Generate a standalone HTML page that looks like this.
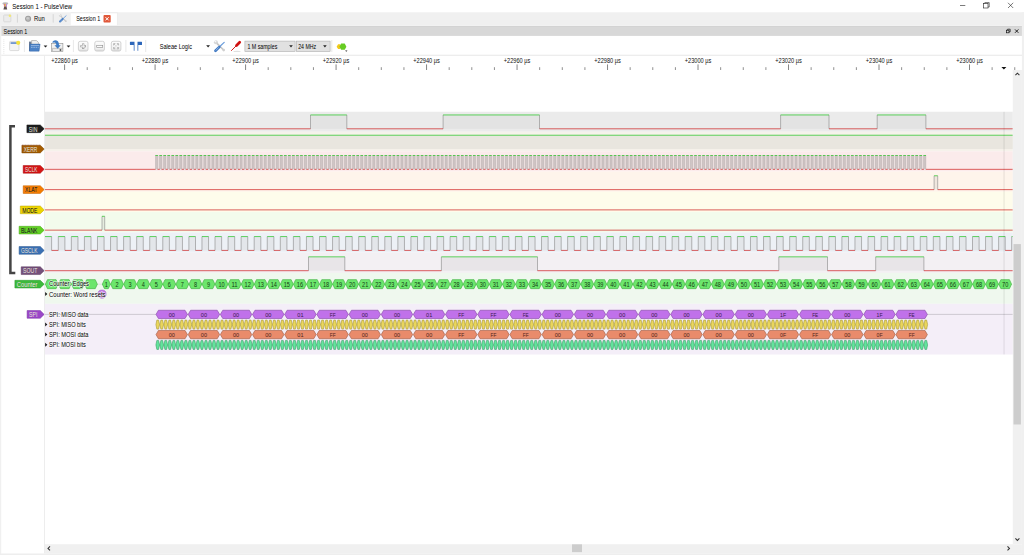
<!DOCTYPE html>
<html lang="en"><head><meta charset="utf-8"><title>Session 1 - PulseView</title>
<style>html,body{margin:0;padding:0;background:#fff;overflow:hidden}svg{display:block;position:absolute;left:0;top:0}text{white-space:pre}</style></head>
<body>
<svg width="1024" height="555" viewBox="0 0 1024 555" font-family="'Liberation Sans', sans-serif" shape-rendering="auto">
<rect x="0.00" y="0.00" width="1024.00" height="555.00" fill="#ffffff" />
<text x="12.30" y="8.75" font-size="7.2" fill="#000" text-anchor="start" textLength="59.80" lengthAdjust="spacingAndGlyphs" >Session 1 - PulseView</text>
<g id="appicon"><ellipse cx="5.3" cy="3.5" rx="3.0" ry="1.2" fill="#bcbcbc"/><rect x="3.9" y="3.8" width="1.05" height="2.9" fill="#e87474"/><rect x="4.95" y="3.8" width="1.0" height="2.9" fill="#d6c654"/><rect x="5.95" y="3.8" width="1.05" height="2.9" fill="#c486e2"/><path d="M4.3 6.5 H6.5 L7.2 9.6 H3.4Z" fill="#5e5050"/></g>
<line x1="960.00" y1="5.50" x2="965.30" y2="5.50" stroke="#222" stroke-width="0.6" />
<rect x="983.6" y="3.6" width="4.4" height="4.4" fill="none" stroke="#222" stroke-width="0.6"/>
<path d="M984.8 3.6 V2.6 H989.2 V7 H988" fill="none" stroke="#222" stroke-width="0.6"/>
<path d="M1008 2.8 L1013.2 8 M1013.2 2.8 L1008 8" stroke="#222" stroke-width="0.6" fill="none"/>
<rect x="0.00" y="12.30" width="1024.00" height="13.40" fill="#f0f0f0" />
<rect x="3.7" y="15" width="7.2" height="6.8" rx="0.8" fill="#ececec" stroke="#cfcfcf" stroke-width="0.6"/>
<circle cx="9.9" cy="15.8" r="1.25" fill="#f2e878"/>
<line x1="17.40" y1="14.20" x2="17.40" y2="22.60" stroke="#cccccc" stroke-width="0.7" />
<circle cx="28.1" cy="18.7" r="3.0" fill="#999"/><circle cx="28.1" cy="18.7" r="2.2" fill="#b4b4b4"/><circle cx="27.7" cy="18.2" r="1.3" fill="#cacaca"/>
<text x="34.10" y="20.60" font-size="6.6" fill="#000" text-anchor="start" textLength="10.80" lengthAdjust="spacingAndGlyphs" >Run</text>
<line x1="53.20" y1="14.20" x2="53.20" y2="22.60" stroke="#cccccc" stroke-width="0.7" />
<path d="M60.54 15.88L65.72 21.06" stroke="#c6c6c6" stroke-width="1.19" stroke-linecap="round" fill="none"/>
<circle cx="60.33" cy="15.60" r="1.40" fill="#d6d6d6"/>
<path d="M59.14 14.34L60.54 15.60" stroke="#fdfdfd" stroke-width="0.77" fill="none"/>
<circle cx="65.79" cy="21.13" r="0.91" fill="#cfcfcf"/>
<path d="M62.64 18.96L66.14 15.74" stroke="#6c9edc" stroke-width="0.88" stroke-linecap="round" fill="none"/>
<path d="M60.05 21.55L62.64 19.03" stroke="#3f78c2" stroke-width="1.89" stroke-linecap="round" fill="none"/>
<path d="M60.33 21.20L62.08 19.52" stroke="#a4c6ee" stroke-width="0.56" stroke-linecap="round" fill="none"/>
<rect x="70.80" y="12.80" width="46.60" height="13.00" fill="#ffffff" />
<line x1="70.80" y1="12.80" x2="117.40" y2="12.80" stroke="#e0e0e0" stroke-width="0.5" />
<line x1="117.40" y1="12.80" x2="117.40" y2="25.60" stroke="#e0e0e0" stroke-width="0.5" />
<text x="76.20" y="21.30" font-size="6.4" fill="#000" text-anchor="start" textLength="24.10" lengthAdjust="spacingAndGlyphs" >Session 1</text>
<rect x="103.50" y="15.10" width="7.20" height="7.40" fill="#e0583a" rx="0.8"/>
<path d="M105.5 17.2 L108.7 20.4 M108.7 17.2 L105.5 20.4" stroke="#fff" stroke-width="1" fill="none"/>
<rect x="1.30" y="25.30" width="1021.00" height="0.70" fill="#f8f8f8" />
<rect x="1.30" y="26.00" width="1021.00" height="9.70" fill="#d8d8d8" />
<line x1="1.30" y1="26.25" x2="1022.00" y2="26.25" stroke="#cccccc" stroke-width="0.5" />
<line x1="1.30" y1="35.45" x2="1022.00" y2="35.45" stroke="#c8c8c8" stroke-width="0.5" />
<text x="3.60" y="34.00" font-size="6.4" fill="#000" text-anchor="start" textLength="23.60" lengthAdjust="spacingAndGlyphs" >Session 1</text>
<rect x="1006.4" y="30.2" width="2.6" height="2.6" fill="none" stroke="#111" stroke-width="0.7"/><path d="M1007.6 30.2 V29.2 H1010.2 V31.8 H1009" fill="none" stroke="#111" stroke-width="0.7"/>
<path d="M1015 29.4 L1018.4 32.8 M1018.4 29.4 L1015 32.8" stroke="#111" stroke-width="0.9" fill="none"/>
<rect x="1.30" y="35.90" width="1021.00" height="19.10" fill="#ffffff" />
<line x1="1.30" y1="55.25" x2="1022.00" y2="55.25" stroke="#dddddd" stroke-width="0.7" />
<rect x="3.60" y="39.50" width="0.60" height="0.70" fill="#c0c0c0" />
<rect x="3.60" y="41.40" width="0.60" height="0.70" fill="#c0c0c0" />
<rect x="3.60" y="43.30" width="0.60" height="0.70" fill="#c0c0c0" />
<rect x="3.60" y="45.20" width="0.60" height="0.70" fill="#c0c0c0" />
<rect x="3.60" y="47.10" width="0.60" height="0.70" fill="#c0c0c0" />
<rect x="3.60" y="49.00" width="0.60" height="0.70" fill="#c0c0c0" />
<rect x="3.60" y="50.90" width="0.60" height="0.70" fill="#c0c0c0" />
<rect x="3.60" y="52.80" width="0.60" height="0.70" fill="#c0c0c0" />
<rect x="9.6" y="41.4" width="9.4" height="9.2" rx="0.8" fill="#f4f4f4" stroke="#c8c8c8" stroke-width="0.6"/>
<rect x="10.60" y="42.40" width="6.40" height="1.30" fill="#3a6fc0" />
<circle cx="18.2" cy="42.8" r="2.1" fill="#f4e23c"/>
<line x1="24.40" y1="40.00" x2="24.40" y2="52.00" stroke="#d8d8d8" stroke-width="0.6" />
<path d="M29.0 41.6 h2.6 v9.4 h-2.6z" fill="#6c7c94"/>
<path d="M31.6 40.5 h4.8 l2.0 1.8 v2.4 h-6.8z" fill="#eeeeee" stroke="#8c8c8c" stroke-width="0.5"/>
<path d="M29.9 44.1 h10.2 l-1.0 7.1 h-9.7z" fill="#4c82c6" stroke="#2e5e9e" stroke-width="0.4"/>
<path d="M31 45.5 h8.2" stroke="#b4cdee" stroke-width="0.6"/>
<path d="M31 47.3 h7.6" stroke="#a9c6ea" stroke-width="0.8" stroke-dasharray="1.6 0.7"/>
<path d="M43.6 45.4 h3.8 l-1.9 2.2z" fill="#222"/>
<rect x="51.5" y="43.3" width="11.4" height="8.3" fill="#f1f1f1" stroke="#8e8e8e" stroke-width="0.6"/>
<path d="M51.5 48.4 h11.4" stroke="#9a9a9a" stroke-width="0.5"/>
<rect x="51.80" y="48.70" width="10.80" height="2.60" fill="#c4c4c4" />
<rect x="53.00" y="49.30" width="6.20" height="1.40" fill="#fbfbfb" />
<rect x="59.90" y="49.00" width="1.00" height="2.00" fill="#555" />
<path d="M52.4 42.8 C52.2 40.4 55.8 39.6 57.6 41.0 C58.7 42.0 59.0 43.6 59.0 45.3 L60.7 45.3 L57.7 48.7 L54.5 45.3 L56.3 45.3 C56.3 43.6 55.7 42.5 54.4 42.5 Z" fill="#3f7cc4"/>
<path d="M66.6 45.4 h3.8 l-1.9 2.2z" fill="#222"/>
<line x1="73.40" y1="40.00" x2="73.40" y2="52.00" stroke="#d8d8d8" stroke-width="0.6" />
<defs><linearGradient id="bg" x1="0" y1="0" x2="0" y2="1"><stop offset="0" stop-color="#fdfdfd"/><stop offset="0.75" stop-color="#f1f1f1"/><stop offset="1" stop-color="#d8d8d8"/></linearGradient></defs>
<rect x="78.4" y="41.3" width="9.6" height="9.8" rx="1.8" fill="url(#bg)" stroke="#c2c2c2" stroke-width="0.7"/>
<rect x="94.8" y="41.3" width="9.6" height="9.8" rx="1.8" fill="url(#bg)" stroke="#c2c2c2" stroke-width="0.7"/>
<rect x="111.3" y="41.3" width="9.6" height="9.8" rx="1.8" fill="url(#bg)" stroke="#c2c2c2" stroke-width="0.7"/>
<path d="M83.2 43.4 v5.6 M80.4 46.2 h5.6" stroke="#909090" stroke-width="2.1" fill="none"/><path d="M83.2 44.0 v4.4 M81.0 46.2 h4.4" stroke="#fbfbfb" stroke-width="1.0" fill="none"/>
<rect x="96.7" y="45.3" width="6.0" height="2.0" fill="#fbfbfb" stroke="#909090" stroke-width="0.6"/>
<path d="M113.6 43.6 h1.8 M113.6 43.6 v1.8 M118.6 43.6 h-1.8 M118.6 43.6 v1.8 M113.6 48.8 h1.8 M113.6 48.8 v-1.8 M118.6 48.8 h-1.8 M118.6 48.8 v-1.8 M114.2 44.2 l1.2 1.2 M118 44.2 l-1.2 1.2 M114.2 48.2 l1.2 -1.2 M118 48.2 l-1.2 -1.2" stroke="#a0a0a0" stroke-width="0.7" fill="none"/>
<line x1="125.90" y1="40.00" x2="125.90" y2="52.00" stroke="#d8d8d8" stroke-width="0.6" />
<path d="M130.4 41.8 h4.1 v8.9 h-0.75 v-5.8 h-3.35 a0.5 0.5 0 0 1 -0.5 -0.5 v-2.1 a0.5 0.5 0 0 1 0.5 -0.5z" fill="#2c66ba"/>
<path d="M137.5 41.8 h4.0 a0.5 0.5 0 0 1 0.5 0.5 v2.1 a0.5 0.5 0 0 1 -0.5 0.5 h-3.25 v5.8 h-0.75z" fill="#2c66ba"/>
<line x1="145.70" y1="40.00" x2="145.70" y2="52.00" stroke="#d8d8d8" stroke-width="0.6" />
<text x="159.80" y="48.60" font-size="6.6" fill="#000" text-anchor="start" textLength="32.20" lengthAdjust="spacingAndGlyphs" >Saleae Logic</text>
<path d="M206.2 45.2 h3.8 l-1.9 2.2z" fill="#222"/>
<path d="M216.20 42.60L223.60 50.00" stroke="#c6c6c6" stroke-width="1.70" stroke-linecap="round" fill="none"/>
<circle cx="215.90" cy="42.20" r="2.00" fill="#d6d6d6"/>
<path d="M214.20 40.40L216.20 42.20" stroke="#fdfdfd" stroke-width="1.10" fill="none"/>
<circle cx="223.70" cy="50.10" r="1.30" fill="#cfcfcf"/>
<path d="M219.20 47.00L224.20 42.40" stroke="#6c9edc" stroke-width="1.25" stroke-linecap="round" fill="none"/>
<path d="M215.50 50.70L219.20 47.10" stroke="#3f78c2" stroke-width="2.70" stroke-linecap="round" fill="none"/>
<path d="M215.90 50.20L218.40 47.80" stroke="#a4c6ee" stroke-width="0.80" stroke-linecap="round" fill="none"/>
<ellipse cx="237" cy="51.4" rx="3.8" ry="0.6" fill="#000" fill-opacity="0.12"/>
<path d="M231.5 50.5 L236.4 45.6" stroke="#d41c1c" stroke-width="1.0" stroke-linecap="round"/>
<path d="M236.5 45.5 L239.7 42.3" stroke="#d01010" stroke-width="2.7" stroke-linecap="round"/>
<rect x="244.9" y="41.1" width="50.2" height="10.4" fill="#e1e1e1" stroke="#adadad" stroke-width="0.6"/>
<text x="247.40" y="48.60" font-size="6.5" fill="#000" text-anchor="start" textLength="29.90" lengthAdjust="spacingAndGlyphs" >1 M samples</text>
<path d="M289.2 45.3 h3.6 l-1.8 2.1z" fill="#222"/>
<rect x="296.3" y="41.1" width="33.8" height="10.4" fill="#e1e1e1" stroke="#adadad" stroke-width="0.6"/>
<text x="298.20" y="48.60" font-size="6.5" fill="#000" text-anchor="start" textLength="18.00" lengthAdjust="spacingAndGlyphs" >24 MHz</text>
<path d="M323.1 45.3 h3.6 l-1.8 2.1z" fill="#222"/>
<line x1="331.80" y1="40.00" x2="331.80" y2="52.00" stroke="#d8d8d8" stroke-width="0.6" />
<path d="M336.6 46.7 l1.5 -2.4 h1.8 l1.2 2.4 l-1.2 2.4 h-1.8z" fill="#f2c81a"/>
<path d="M339.4 46.7 l1.7 -3.1 h3.6 l1.7 3.1 l-1.7 3.1 h-3.6z" fill="#66cc22"/>
<path d="M345.1 50.4 h2.4 l-1.2 1.4z" fill="#222"/>
<line x1="44.50" y1="55.60" x2="44.50" y2="553.50" stroke="#e9e9e9" stroke-width="0.8" />
<line x1="64.60" y1="64.40" x2="64.60" y2="70.00" stroke="#333" stroke-width="0.6" />
<text x="64.60" y="62.70" font-size="7.0" fill="#111" text-anchor="middle" textLength="26.60" lengthAdjust="spacingAndGlyphs" >+22860 µs</text>
<line x1="87.22" y1="67.20" x2="87.22" y2="70.00" stroke="#333" stroke-width="0.55" />
<line x1="109.84" y1="67.20" x2="109.84" y2="70.00" stroke="#333" stroke-width="0.55" />
<line x1="132.47" y1="67.20" x2="132.47" y2="70.00" stroke="#333" stroke-width="0.55" />
<line x1="155.09" y1="64.40" x2="155.09" y2="70.00" stroke="#333" stroke-width="0.6" />
<text x="155.09" y="62.70" font-size="7.0" fill="#111" text-anchor="middle" textLength="26.60" lengthAdjust="spacingAndGlyphs" >+22880 µs</text>
<line x1="177.71" y1="67.20" x2="177.71" y2="70.00" stroke="#333" stroke-width="0.55" />
<line x1="200.33" y1="67.20" x2="200.33" y2="70.00" stroke="#333" stroke-width="0.55" />
<line x1="222.96" y1="67.20" x2="222.96" y2="70.00" stroke="#333" stroke-width="0.55" />
<line x1="245.58" y1="64.40" x2="245.58" y2="70.00" stroke="#333" stroke-width="0.6" />
<text x="245.58" y="62.70" font-size="7.0" fill="#111" text-anchor="middle" textLength="26.60" lengthAdjust="spacingAndGlyphs" >+22900 µs</text>
<line x1="268.20" y1="67.20" x2="268.20" y2="70.00" stroke="#333" stroke-width="0.55" />
<line x1="290.82" y1="67.20" x2="290.82" y2="70.00" stroke="#333" stroke-width="0.55" />
<line x1="313.45" y1="67.20" x2="313.45" y2="70.00" stroke="#333" stroke-width="0.55" />
<line x1="336.07" y1="64.40" x2="336.07" y2="70.00" stroke="#333" stroke-width="0.6" />
<text x="336.07" y="62.70" font-size="7.0" fill="#111" text-anchor="middle" textLength="26.60" lengthAdjust="spacingAndGlyphs" >+22920 µs</text>
<line x1="358.69" y1="67.20" x2="358.69" y2="70.00" stroke="#333" stroke-width="0.55" />
<line x1="381.31" y1="67.20" x2="381.31" y2="70.00" stroke="#333" stroke-width="0.55" />
<line x1="403.94" y1="67.20" x2="403.94" y2="70.00" stroke="#333" stroke-width="0.55" />
<line x1="426.56" y1="64.40" x2="426.56" y2="70.00" stroke="#333" stroke-width="0.6" />
<text x="426.56" y="62.70" font-size="7.0" fill="#111" text-anchor="middle" textLength="26.60" lengthAdjust="spacingAndGlyphs" >+22940 µs</text>
<line x1="449.18" y1="67.20" x2="449.18" y2="70.00" stroke="#333" stroke-width="0.55" />
<line x1="471.80" y1="67.20" x2="471.80" y2="70.00" stroke="#333" stroke-width="0.55" />
<line x1="494.43" y1="67.20" x2="494.43" y2="70.00" stroke="#333" stroke-width="0.55" />
<line x1="517.05" y1="64.40" x2="517.05" y2="70.00" stroke="#333" stroke-width="0.6" />
<text x="517.05" y="62.70" font-size="7.0" fill="#111" text-anchor="middle" textLength="26.60" lengthAdjust="spacingAndGlyphs" >+22960 µs</text>
<line x1="539.67" y1="67.20" x2="539.67" y2="70.00" stroke="#333" stroke-width="0.55" />
<line x1="562.29" y1="67.20" x2="562.29" y2="70.00" stroke="#333" stroke-width="0.55" />
<line x1="584.92" y1="67.20" x2="584.92" y2="70.00" stroke="#333" stroke-width="0.55" />
<line x1="607.54" y1="64.40" x2="607.54" y2="70.00" stroke="#333" stroke-width="0.6" />
<text x="607.54" y="62.70" font-size="7.0" fill="#111" text-anchor="middle" textLength="26.60" lengthAdjust="spacingAndGlyphs" >+22980 µs</text>
<line x1="630.16" y1="67.20" x2="630.16" y2="70.00" stroke="#333" stroke-width="0.55" />
<line x1="652.78" y1="67.20" x2="652.78" y2="70.00" stroke="#333" stroke-width="0.55" />
<line x1="675.41" y1="67.20" x2="675.41" y2="70.00" stroke="#333" stroke-width="0.55" />
<line x1="698.03" y1="64.40" x2="698.03" y2="70.00" stroke="#333" stroke-width="0.6" />
<text x="698.03" y="62.70" font-size="7.0" fill="#111" text-anchor="middle" textLength="26.60" lengthAdjust="spacingAndGlyphs" >+23000 µs</text>
<line x1="720.65" y1="67.20" x2="720.65" y2="70.00" stroke="#333" stroke-width="0.55" />
<line x1="743.27" y1="67.20" x2="743.27" y2="70.00" stroke="#333" stroke-width="0.55" />
<line x1="765.90" y1="67.20" x2="765.90" y2="70.00" stroke="#333" stroke-width="0.55" />
<line x1="788.52" y1="64.40" x2="788.52" y2="70.00" stroke="#333" stroke-width="0.6" />
<text x="788.52" y="62.70" font-size="7.0" fill="#111" text-anchor="middle" textLength="26.60" lengthAdjust="spacingAndGlyphs" >+23020 µs</text>
<line x1="811.14" y1="67.20" x2="811.14" y2="70.00" stroke="#333" stroke-width="0.55" />
<line x1="833.76" y1="67.20" x2="833.76" y2="70.00" stroke="#333" stroke-width="0.55" />
<line x1="856.39" y1="67.20" x2="856.39" y2="70.00" stroke="#333" stroke-width="0.55" />
<line x1="879.01" y1="64.40" x2="879.01" y2="70.00" stroke="#333" stroke-width="0.6" />
<text x="879.01" y="62.70" font-size="7.0" fill="#111" text-anchor="middle" textLength="26.60" lengthAdjust="spacingAndGlyphs" >+23040 µs</text>
<line x1="901.63" y1="67.20" x2="901.63" y2="70.00" stroke="#333" stroke-width="0.55" />
<line x1="924.25" y1="67.20" x2="924.25" y2="70.00" stroke="#333" stroke-width="0.55" />
<line x1="946.88" y1="67.20" x2="946.88" y2="70.00" stroke="#333" stroke-width="0.55" />
<line x1="969.50" y1="64.40" x2="969.50" y2="70.00" stroke="#333" stroke-width="0.6" />
<text x="969.50" y="62.70" font-size="7.0" fill="#111" text-anchor="middle" textLength="26.60" lengthAdjust="spacingAndGlyphs" >+23060 µs</text>
<line x1="992.12" y1="67.20" x2="992.12" y2="70.00" stroke="#333" stroke-width="0.55" />
<line x1="1014.75" y1="67.20" x2="1014.75" y2="70.00" stroke="#333" stroke-width="0.55" />
<path d="M1001.4 67 h5 l-2.5 2.6z" fill="#111"/>
<rect x="45.00" y="111.76" width="967.80" height="19.99" fill="#ebebeb" />
<rect x="45.00" y="131.70" width="967.80" height="19.62" fill="#f6f2eb" />
<rect x="45.00" y="151.27" width="967.80" height="20.32" fill="#fbebeb" />
<rect x="45.00" y="171.54" width="967.80" height="20.32" fill="#fef4eb" />
<rect x="45.00" y="191.81" width="967.80" height="20.32" fill="#fefceb" />
<rect x="45.00" y="212.08" width="967.80" height="20.32" fill="#f3fbec" />
<rect x="45.00" y="232.35" width="967.80" height="20.32" fill="#edf1f6" />
<rect x="45.00" y="252.62" width="967.80" height="20.32" fill="#f3f0f3" />
<rect x="45.00" y="272.89" width="967.80" height="30.91" fill="#eff8ee" />
<rect x="45.00" y="303.80" width="967.80" height="50.70" fill="#f4eef8" />
<rect x="310.50" y="114.95" width="36.30" height="13.85" fill="#e3e3e3" />
<rect x="443.10" y="114.95" width="96.40" height="13.85" fill="#e3e3e3" />
<rect x="780.60" y="114.95" width="48.40" height="13.85" fill="#e3e3e3" />
<rect x="877.20" y="114.95" width="48.70" height="13.85" fill="#e3e3e3" />
<path d="M310.50 114.95V128.80M346.80 114.95V128.80M443.10 114.95V128.80M539.50 114.95V128.80M780.60 114.95V128.80M829.00 114.95V128.80M877.20 114.95V128.80M925.90 114.95V128.80" stroke="#8a8a8a" stroke-width="0.62" fill="none"/>
<path d="M45.00 128.80H310.50M346.80 128.80H443.10M539.50 128.80H780.60M829.00 128.80H877.20M925.90 128.80H1012.80" stroke="#c80000" stroke-width="0.62" fill="none"/>
<path d="M310.50 114.95H346.80M443.10 114.95H539.50M780.60 114.95H829.00M877.20 114.95H925.90" stroke="#00c000" stroke-width="0.62" fill="none"/>
<rect x="45.00" y="135.22" width="967.80" height="13.85" fill="#e9e6df" />
<path d="M45.00 135.22H1012.80" stroke="#00c000" stroke-width="0.62" fill="none"/>
<rect x="155.25" y="155.49" width="770.77" height="13.85" fill="#f0e4e4" />
<path d="M155.55 155.49H157.75V169.34H155.55ZM159.57 155.49H161.77V169.34H159.57ZM163.59 155.49H165.79V169.34H163.59ZM167.61 155.49H169.81V169.34H167.61ZM171.64 155.49H173.84V169.34H171.64ZM175.66 155.49H177.86V169.34H175.66ZM179.68 155.49H181.88V169.34H179.68ZM183.70 155.49H185.90V169.34H183.70ZM187.72 155.49H189.92V169.34H187.72ZM191.74 155.49H193.94V169.34H191.74ZM195.76 155.49H197.96V169.34H195.76ZM199.78 155.49H201.98V169.34H199.78ZM203.81 155.49H206.01V169.34H203.81ZM207.83 155.49H210.03V169.34H207.83ZM211.85 155.49H214.05V169.34H211.85ZM215.87 155.49H218.07V169.34H215.87ZM219.89 155.49H222.09V169.34H219.89ZM223.91 155.49H226.11V169.34H223.91ZM227.93 155.49H230.13V169.34H227.93ZM231.95 155.49H234.15V169.34H231.95ZM235.98 155.49H238.18V169.34H235.98ZM240.00 155.49H242.20V169.34H240.00ZM244.02 155.49H246.22V169.34H244.02ZM248.04 155.49H250.24V169.34H248.04ZM252.06 155.49H254.26V169.34H252.06ZM256.08 155.49H258.28V169.34H256.08ZM260.10 155.49H262.30V169.34H260.10ZM264.13 155.49H266.33V169.34H264.13ZM268.15 155.49H270.35V169.34H268.15ZM272.17 155.49H274.37V169.34H272.17ZM276.19 155.49H278.39V169.34H276.19ZM280.21 155.49H282.41V169.34H280.21ZM284.23 155.49H286.43V169.34H284.23ZM288.25 155.49H290.45V169.34H288.25ZM292.27 155.49H294.47V169.34H292.27ZM296.30 155.49H298.50V169.34H296.30ZM300.32 155.49H302.52V169.34H300.32ZM304.34 155.49H306.54V169.34H304.34ZM308.36 155.49H310.56V169.34H308.36ZM312.38 155.49H314.58V169.34H312.38ZM316.40 155.49H318.60V169.34H316.40ZM320.42 155.49H322.62V169.34H320.42ZM324.44 155.49H326.64V169.34H324.44ZM328.47 155.49H330.67V169.34H328.47ZM332.49 155.49H334.69V169.34H332.49ZM336.51 155.49H338.71V169.34H336.51ZM340.53 155.49H342.73V169.34H340.53ZM344.55 155.49H346.75V169.34H344.55ZM348.57 155.49H350.77V169.34H348.57ZM352.59 155.49H354.79V169.34H352.59ZM356.62 155.49H358.81V169.34H356.62ZM360.64 155.49H362.84V169.34H360.64ZM364.66 155.49H366.86V169.34H364.66ZM368.68 155.49H370.88V169.34H368.68ZM372.70 155.49H374.90V169.34H372.70ZM376.72 155.49H378.92V169.34H376.72ZM380.74 155.49H382.94V169.34H380.74ZM384.76 155.49H386.96V169.34H384.76ZM388.79 155.49H390.99V169.34H388.79ZM392.81 155.49H395.01V169.34H392.81ZM396.83 155.49H399.03V169.34H396.83ZM400.85 155.49H403.05V169.34H400.85ZM404.87 155.49H407.07V169.34H404.87ZM408.89 155.49H411.09V169.34H408.89ZM412.91 155.49H415.11V169.34H412.91ZM416.93 155.49H419.13V169.34H416.93ZM420.96 155.49H423.16V169.34H420.96ZM424.98 155.49H427.18V169.34H424.98ZM429.00 155.49H431.20V169.34H429.00ZM433.02 155.49H435.22V169.34H433.02ZM437.04 155.49H439.24V169.34H437.04ZM441.06 155.49H443.26V169.34H441.06ZM445.08 155.49H447.28V169.34H445.08ZM449.10 155.49H451.30V169.34H449.10ZM453.13 155.49H455.33V169.34H453.13ZM457.15 155.49H459.35V169.34H457.15ZM461.17 155.49H463.37V169.34H461.17ZM465.19 155.49H467.39V169.34H465.19ZM469.21 155.49H471.41V169.34H469.21ZM473.23 155.49H475.43V169.34H473.23ZM477.25 155.49H479.45V169.34H477.25ZM481.28 155.49H483.48V169.34H481.28ZM485.30 155.49H487.50V169.34H485.30ZM489.32 155.49H491.52V169.34H489.32ZM493.34 155.49H495.54V169.34H493.34ZM497.36 155.49H499.56V169.34H497.36ZM501.38 155.49H503.58V169.34H501.38ZM505.40 155.49H507.60V169.34H505.40ZM509.42 155.49H511.62V169.34H509.42ZM513.45 155.49H515.65V169.34H513.45ZM517.47 155.49H519.67V169.34H517.47ZM521.49 155.49H523.69V169.34H521.49ZM525.51 155.49H527.71V169.34H525.51ZM529.53 155.49H531.73V169.34H529.53ZM533.55 155.49H535.75V169.34H533.55ZM537.57 155.49H539.77V169.34H537.57ZM541.59 155.49H543.79V169.34H541.59ZM545.62 155.49H547.82V169.34H545.62ZM549.64 155.49H551.84V169.34H549.64ZM553.66 155.49H555.86V169.34H553.66ZM557.68 155.49H559.88V169.34H557.68ZM561.70 155.49H563.90V169.34H561.70ZM565.72 155.49H567.92V169.34H565.72ZM569.74 155.49H571.94V169.34H569.74ZM573.77 155.49H575.97V169.34H573.77ZM577.79 155.49H579.99V169.34H577.79ZM581.81 155.49H584.01V169.34H581.81ZM585.83 155.49H588.03V169.34H585.83ZM589.85 155.49H592.05V169.34H589.85ZM593.87 155.49H596.07V169.34H593.87ZM597.89 155.49H600.09V169.34H597.89ZM601.91 155.49H604.11V169.34H601.91ZM605.94 155.49H608.14V169.34H605.94ZM609.96 155.49H612.16V169.34H609.96ZM613.98 155.49H616.18V169.34H613.98ZM618.00 155.49H620.20V169.34H618.00ZM622.02 155.49H624.22V169.34H622.02ZM626.04 155.49H628.24V169.34H626.04ZM630.06 155.49H632.26V169.34H630.06ZM634.08 155.49H636.28V169.34H634.08ZM638.11 155.49H640.31V169.34H638.11ZM642.13 155.49H644.33V169.34H642.13ZM646.15 155.49H648.35V169.34H646.15ZM650.17 155.49H652.37V169.34H650.17ZM654.19 155.49H656.39V169.34H654.19ZM658.21 155.49H660.41V169.34H658.21ZM662.23 155.49H664.43V169.34H662.23ZM666.26 155.49H668.46V169.34H666.26ZM670.28 155.49H672.48V169.34H670.28ZM674.30 155.49H676.50V169.34H674.30ZM678.32 155.49H680.52V169.34H678.32ZM682.34 155.49H684.54V169.34H682.34ZM686.36 155.49H688.56V169.34H686.36ZM690.38 155.49H692.58V169.34H690.38ZM694.40 155.49H696.60V169.34H694.40ZM698.43 155.49H700.63V169.34H698.43ZM702.45 155.49H704.65V169.34H702.45ZM706.47 155.49H708.67V169.34H706.47ZM710.49 155.49H712.69V169.34H710.49ZM714.51 155.49H716.71V169.34H714.51ZM718.53 155.49H720.73V169.34H718.53ZM722.55 155.49H724.75V169.34H722.55ZM726.57 155.49H728.77V169.34H726.57ZM730.60 155.49H732.80V169.34H730.60ZM734.62 155.49H736.82V169.34H734.62ZM738.64 155.49H740.84V169.34H738.64ZM742.66 155.49H744.86V169.34H742.66ZM746.68 155.49H748.88V169.34H746.68ZM750.70 155.49H752.90V169.34H750.70ZM754.72 155.49H756.92V169.34H754.72ZM758.75 155.49H760.95V169.34H758.75ZM762.77 155.49H764.97V169.34H762.77ZM766.79 155.49H768.99V169.34H766.79ZM770.81 155.49H773.01V169.34H770.81ZM774.83 155.49H777.03V169.34H774.83ZM778.85 155.49H781.05V169.34H778.85ZM782.87 155.49H785.07V169.34H782.87ZM786.89 155.49H789.09V169.34H786.89ZM790.92 155.49H793.12V169.34H790.92ZM794.94 155.49H797.14V169.34H794.94ZM798.96 155.49H801.16V169.34H798.96ZM802.98 155.49H805.18V169.34H802.98ZM807.00 155.49H809.20V169.34H807.00ZM811.02 155.49H813.22V169.34H811.02ZM815.04 155.49H817.24V169.34H815.04ZM819.06 155.49H821.26V169.34H819.06ZM823.09 155.49H825.29V169.34H823.09ZM827.11 155.49H829.31V169.34H827.11ZM831.13 155.49H833.33V169.34H831.13ZM835.15 155.49H837.35V169.34H835.15ZM839.17 155.49H841.37V169.34H839.17ZM843.19 155.49H845.39V169.34H843.19ZM847.21 155.49H849.41V169.34H847.21ZM851.23 155.49H853.43V169.34H851.23ZM855.26 155.49H857.46V169.34H855.26ZM859.28 155.49H861.48V169.34H859.28ZM863.30 155.49H865.50V169.34H863.30ZM867.32 155.49H869.52V169.34H867.32ZM871.34 155.49H873.54V169.34H871.34ZM875.36 155.49H877.56V169.34H875.36ZM879.38 155.49H881.58V169.34H879.38ZM883.41 155.49H885.61V169.34H883.41ZM887.43 155.49H889.63V169.34H887.43ZM891.45 155.49H893.65V169.34H891.45ZM895.47 155.49H897.67V169.34H895.47ZM899.49 155.49H901.69V169.34H899.49ZM903.51 155.49H905.71V169.34H903.51ZM907.53 155.49H909.73V169.34H907.53ZM911.55 155.49H913.75V169.34H911.55ZM915.58 155.49H917.78V169.34H915.58ZM919.60 155.49H921.80V169.34H919.60ZM923.62 155.49H925.82V169.34H923.62Z" fill="#d0c5c5"/>
<path d="M155.55 155.49V169.34M157.75 155.49V169.34M159.57 155.49V169.34M161.77 155.49V169.34M163.59 155.49V169.34M165.79 155.49V169.34M167.61 155.49V169.34M169.81 155.49V169.34M171.64 155.49V169.34M173.84 155.49V169.34M175.66 155.49V169.34M177.86 155.49V169.34M179.68 155.49V169.34M181.88 155.49V169.34M183.70 155.49V169.34M185.90 155.49V169.34M187.72 155.49V169.34M189.92 155.49V169.34M191.74 155.49V169.34M193.94 155.49V169.34M195.76 155.49V169.34M197.96 155.49V169.34M199.78 155.49V169.34M201.98 155.49V169.34M203.81 155.49V169.34M206.01 155.49V169.34M207.83 155.49V169.34M210.03 155.49V169.34M211.85 155.49V169.34M214.05 155.49V169.34M215.87 155.49V169.34M218.07 155.49V169.34M219.89 155.49V169.34M222.09 155.49V169.34M223.91 155.49V169.34M226.11 155.49V169.34M227.93 155.49V169.34M230.13 155.49V169.34M231.95 155.49V169.34M234.15 155.49V169.34M235.98 155.49V169.34M238.18 155.49V169.34M240.00 155.49V169.34M242.20 155.49V169.34M244.02 155.49V169.34M246.22 155.49V169.34M248.04 155.49V169.34M250.24 155.49V169.34M252.06 155.49V169.34M254.26 155.49V169.34M256.08 155.49V169.34M258.28 155.49V169.34M260.10 155.49V169.34M262.30 155.49V169.34M264.13 155.49V169.34M266.33 155.49V169.34M268.15 155.49V169.34M270.35 155.49V169.34M272.17 155.49V169.34M274.37 155.49V169.34M276.19 155.49V169.34M278.39 155.49V169.34M280.21 155.49V169.34M282.41 155.49V169.34M284.23 155.49V169.34M286.43 155.49V169.34M288.25 155.49V169.34M290.45 155.49V169.34M292.27 155.49V169.34M294.47 155.49V169.34M296.30 155.49V169.34M298.50 155.49V169.34M300.32 155.49V169.34M302.52 155.49V169.34M304.34 155.49V169.34M306.54 155.49V169.34M308.36 155.49V169.34M310.56 155.49V169.34M312.38 155.49V169.34M314.58 155.49V169.34M316.40 155.49V169.34M318.60 155.49V169.34M320.42 155.49V169.34M322.62 155.49V169.34M324.44 155.49V169.34M326.64 155.49V169.34M328.47 155.49V169.34M330.67 155.49V169.34M332.49 155.49V169.34M334.69 155.49V169.34M336.51 155.49V169.34M338.71 155.49V169.34M340.53 155.49V169.34M342.73 155.49V169.34M344.55 155.49V169.34M346.75 155.49V169.34M348.57 155.49V169.34M350.77 155.49V169.34M352.59 155.49V169.34M354.79 155.49V169.34M356.62 155.49V169.34M358.81 155.49V169.34M360.64 155.49V169.34M362.84 155.49V169.34M364.66 155.49V169.34M366.86 155.49V169.34M368.68 155.49V169.34M370.88 155.49V169.34M372.70 155.49V169.34M374.90 155.49V169.34M376.72 155.49V169.34M378.92 155.49V169.34M380.74 155.49V169.34M382.94 155.49V169.34M384.76 155.49V169.34M386.96 155.49V169.34M388.79 155.49V169.34M390.99 155.49V169.34M392.81 155.49V169.34M395.01 155.49V169.34M396.83 155.49V169.34M399.03 155.49V169.34M400.85 155.49V169.34M403.05 155.49V169.34M404.87 155.49V169.34M407.07 155.49V169.34M408.89 155.49V169.34M411.09 155.49V169.34M412.91 155.49V169.34M415.11 155.49V169.34M416.93 155.49V169.34M419.13 155.49V169.34M420.96 155.49V169.34M423.16 155.49V169.34M424.98 155.49V169.34M427.18 155.49V169.34M429.00 155.49V169.34M431.20 155.49V169.34M433.02 155.49V169.34M435.22 155.49V169.34M437.04 155.49V169.34M439.24 155.49V169.34M441.06 155.49V169.34M443.26 155.49V169.34M445.08 155.49V169.34M447.28 155.49V169.34M449.10 155.49V169.34M451.30 155.49V169.34M453.13 155.49V169.34M455.33 155.49V169.34M457.15 155.49V169.34M459.35 155.49V169.34M461.17 155.49V169.34M463.37 155.49V169.34M465.19 155.49V169.34M467.39 155.49V169.34M469.21 155.49V169.34M471.41 155.49V169.34M473.23 155.49V169.34M475.43 155.49V169.34M477.25 155.49V169.34M479.45 155.49V169.34M481.28 155.49V169.34M483.48 155.49V169.34M485.30 155.49V169.34M487.50 155.49V169.34M489.32 155.49V169.34M491.52 155.49V169.34M493.34 155.49V169.34M495.54 155.49V169.34M497.36 155.49V169.34M499.56 155.49V169.34M501.38 155.49V169.34M503.58 155.49V169.34M505.40 155.49V169.34M507.60 155.49V169.34M509.42 155.49V169.34M511.62 155.49V169.34M513.45 155.49V169.34M515.65 155.49V169.34M517.47 155.49V169.34M519.67 155.49V169.34M521.49 155.49V169.34M523.69 155.49V169.34M525.51 155.49V169.34M527.71 155.49V169.34M529.53 155.49V169.34M531.73 155.49V169.34M533.55 155.49V169.34M535.75 155.49V169.34M537.57 155.49V169.34M539.77 155.49V169.34M541.59 155.49V169.34M543.79 155.49V169.34M545.62 155.49V169.34M547.82 155.49V169.34M549.64 155.49V169.34M551.84 155.49V169.34M553.66 155.49V169.34M555.86 155.49V169.34M557.68 155.49V169.34M559.88 155.49V169.34M561.70 155.49V169.34M563.90 155.49V169.34M565.72 155.49V169.34M567.92 155.49V169.34M569.74 155.49V169.34M571.94 155.49V169.34M573.77 155.49V169.34M575.97 155.49V169.34M577.79 155.49V169.34M579.99 155.49V169.34M581.81 155.49V169.34M584.01 155.49V169.34M585.83 155.49V169.34M588.03 155.49V169.34M589.85 155.49V169.34M592.05 155.49V169.34M593.87 155.49V169.34M596.07 155.49V169.34M597.89 155.49V169.34M600.09 155.49V169.34M601.91 155.49V169.34M604.11 155.49V169.34M605.94 155.49V169.34M608.14 155.49V169.34M609.96 155.49V169.34M612.16 155.49V169.34M613.98 155.49V169.34M616.18 155.49V169.34M618.00 155.49V169.34M620.20 155.49V169.34M622.02 155.49V169.34M624.22 155.49V169.34M626.04 155.49V169.34M628.24 155.49V169.34M630.06 155.49V169.34M632.26 155.49V169.34M634.08 155.49V169.34M636.28 155.49V169.34M638.11 155.49V169.34M640.31 155.49V169.34M642.13 155.49V169.34M644.33 155.49V169.34M646.15 155.49V169.34M648.35 155.49V169.34M650.17 155.49V169.34M652.37 155.49V169.34M654.19 155.49V169.34M656.39 155.49V169.34M658.21 155.49V169.34M660.41 155.49V169.34M662.23 155.49V169.34M664.43 155.49V169.34M666.26 155.49V169.34M668.46 155.49V169.34M670.28 155.49V169.34M672.48 155.49V169.34M674.30 155.49V169.34M676.50 155.49V169.34M678.32 155.49V169.34M680.52 155.49V169.34M682.34 155.49V169.34M684.54 155.49V169.34M686.36 155.49V169.34M688.56 155.49V169.34M690.38 155.49V169.34M692.58 155.49V169.34M694.40 155.49V169.34M696.60 155.49V169.34M698.43 155.49V169.34M700.63 155.49V169.34M702.45 155.49V169.34M704.65 155.49V169.34M706.47 155.49V169.34M708.67 155.49V169.34M710.49 155.49V169.34M712.69 155.49V169.34M714.51 155.49V169.34M716.71 155.49V169.34M718.53 155.49V169.34M720.73 155.49V169.34M722.55 155.49V169.34M724.75 155.49V169.34M726.57 155.49V169.34M728.77 155.49V169.34M730.60 155.49V169.34M732.80 155.49V169.34M734.62 155.49V169.34M736.82 155.49V169.34M738.64 155.49V169.34M740.84 155.49V169.34M742.66 155.49V169.34M744.86 155.49V169.34M746.68 155.49V169.34M748.88 155.49V169.34M750.70 155.49V169.34M752.90 155.49V169.34M754.72 155.49V169.34M756.92 155.49V169.34M758.75 155.49V169.34M760.95 155.49V169.34M762.77 155.49V169.34M764.97 155.49V169.34M766.79 155.49V169.34M768.99 155.49V169.34M770.81 155.49V169.34M773.01 155.49V169.34M774.83 155.49V169.34M777.03 155.49V169.34M778.85 155.49V169.34M781.05 155.49V169.34M782.87 155.49V169.34M785.07 155.49V169.34M786.89 155.49V169.34M789.09 155.49V169.34M790.92 155.49V169.34M793.12 155.49V169.34M794.94 155.49V169.34M797.14 155.49V169.34M798.96 155.49V169.34M801.16 155.49V169.34M802.98 155.49V169.34M805.18 155.49V169.34M807.00 155.49V169.34M809.20 155.49V169.34M811.02 155.49V169.34M813.22 155.49V169.34M815.04 155.49V169.34M817.24 155.49V169.34M819.06 155.49V169.34M821.26 155.49V169.34M823.09 155.49V169.34M825.29 155.49V169.34M827.11 155.49V169.34M829.31 155.49V169.34M831.13 155.49V169.34M833.33 155.49V169.34M835.15 155.49V169.34M837.35 155.49V169.34M839.17 155.49V169.34M841.37 155.49V169.34M843.19 155.49V169.34M845.39 155.49V169.34M847.21 155.49V169.34M849.41 155.49V169.34M851.23 155.49V169.34M853.43 155.49V169.34M855.26 155.49V169.34M857.46 155.49V169.34M859.28 155.49V169.34M861.48 155.49V169.34M863.30 155.49V169.34M865.50 155.49V169.34M867.32 155.49V169.34M869.52 155.49V169.34M871.34 155.49V169.34M873.54 155.49V169.34M875.36 155.49V169.34M877.56 155.49V169.34M879.38 155.49V169.34M881.58 155.49V169.34M883.41 155.49V169.34M885.61 155.49V169.34M887.43 155.49V169.34M889.63 155.49V169.34M891.45 155.49V169.34M893.65 155.49V169.34M895.47 155.49V169.34M897.67 155.49V169.34M899.49 155.49V169.34M901.69 155.49V169.34M903.51 155.49V169.34M905.71 155.49V169.34M907.53 155.49V169.34M909.73 155.49V169.34M911.55 155.49V169.34M913.75 155.49V169.34M915.58 155.49V169.34M917.78 155.49V169.34M919.60 155.49V169.34M921.80 155.49V169.34M923.62 155.49V169.34M925.82 155.49V169.34" stroke="#a8a0a0" stroke-width="0.36" fill="none"/>
<path d="M45.00 169.34H155.55M925.82 169.34H1012.80M157.55 169.34H159.77M161.57 169.34H163.79M165.59 169.34H167.81M169.61 169.34H171.84M173.64 169.34H175.86M177.66 169.34H179.88M181.68 169.34H183.90M185.70 169.34H187.92M189.72 169.34H191.94M193.74 169.34H195.96M197.76 169.34H199.98M201.78 169.34H204.01M205.81 169.34H208.03M209.83 169.34H212.05M213.85 169.34H216.07M217.87 169.34H220.09M221.89 169.34H224.11M225.91 169.34H228.13M229.93 169.34H232.15M233.95 169.34H236.18M237.98 169.34H240.20M242.00 169.34H244.22M246.02 169.34H248.24M250.04 169.34H252.26M254.06 169.34H256.28M258.08 169.34H260.30M262.10 169.34H264.33M266.13 169.34H268.35M270.15 169.34H272.37M274.17 169.34H276.39M278.19 169.34H280.41M282.21 169.34H284.43M286.23 169.34H288.45M290.25 169.34H292.47M294.27 169.34H296.50M298.30 169.34H300.52M302.32 169.34H304.54M306.34 169.34H308.56M310.36 169.34H312.58M314.38 169.34H316.60M318.40 169.34H320.62M322.42 169.34H324.64M326.44 169.34H328.67M330.47 169.34H332.69M334.49 169.34H336.71M338.51 169.34H340.73M342.53 169.34H344.75M346.55 169.34H348.77M350.57 169.34H352.79M354.59 169.34H356.81M358.62 169.34H360.84M362.64 169.34H364.86M366.66 169.34H368.88M370.68 169.34H372.90M374.70 169.34H376.92M378.72 169.34H380.94M382.74 169.34H384.96M386.76 169.34H388.99M390.79 169.34H393.01M394.81 169.34H397.03M398.83 169.34H401.05M402.85 169.34H405.07M406.87 169.34H409.09M410.89 169.34H413.11M414.91 169.34H417.13M418.93 169.34H421.16M422.96 169.34H425.18M426.98 169.34H429.20M431.00 169.34H433.22M435.02 169.34H437.24M439.04 169.34H441.26M443.06 169.34H445.28M447.08 169.34H449.30M451.10 169.34H453.33M455.13 169.34H457.35M459.15 169.34H461.37M463.17 169.34H465.39M467.19 169.34H469.41M471.21 169.34H473.43M475.23 169.34H477.45M479.25 169.34H481.48M483.28 169.34H485.50M487.30 169.34H489.52M491.32 169.34H493.54M495.34 169.34H497.56M499.36 169.34H501.58M503.38 169.34H505.60M507.40 169.34H509.62M511.42 169.34H513.65M515.45 169.34H517.67M519.47 169.34H521.69M523.49 169.34H525.71M527.51 169.34H529.73M531.53 169.34H533.75M535.55 169.34H537.77M539.57 169.34H541.79M543.59 169.34H545.82M547.62 169.34H549.84M551.64 169.34H553.86M555.66 169.34H557.88M559.68 169.34H561.90M563.70 169.34H565.92M567.72 169.34H569.94M571.74 169.34H573.97M575.77 169.34H577.99M579.79 169.34H582.01M583.81 169.34H586.03M587.83 169.34H590.05M591.85 169.34H594.07M595.87 169.34H598.09M599.89 169.34H602.11M603.91 169.34H606.14M607.94 169.34H610.16M611.96 169.34H614.18M615.98 169.34H618.20M620.00 169.34H622.22M624.02 169.34H626.24M628.04 169.34H630.26M632.06 169.34H634.28M636.08 169.34H638.31M640.11 169.34H642.33M644.13 169.34H646.35M648.15 169.34H650.37M652.17 169.34H654.39M656.19 169.34H658.41M660.21 169.34H662.43M664.23 169.34H666.46M668.26 169.34H670.48M672.28 169.34H674.50M676.30 169.34H678.52M680.32 169.34H682.54M684.34 169.34H686.56M688.36 169.34H690.58M692.38 169.34H694.60M696.40 169.34H698.63M700.43 169.34H702.65M704.45 169.34H706.67M708.47 169.34H710.69M712.49 169.34H714.71M716.51 169.34H718.73M720.53 169.34H722.75M724.55 169.34H726.77M728.57 169.34H730.80M732.60 169.34H734.82M736.62 169.34H738.84M740.64 169.34H742.86M744.66 169.34H746.88M748.68 169.34H750.90M752.70 169.34H754.92M756.72 169.34H758.95M760.75 169.34H762.97M764.77 169.34H766.99M768.79 169.34H771.01M772.81 169.34H775.03M776.83 169.34H779.05M780.85 169.34H783.07M784.87 169.34H787.09M788.89 169.34H791.12M792.92 169.34H795.14M796.94 169.34H799.16M800.96 169.34H803.18M804.98 169.34H807.20M809.00 169.34H811.22M813.02 169.34H815.24M817.04 169.34H819.26M821.06 169.34H823.29M825.09 169.34H827.31M829.11 169.34H831.33M833.13 169.34H835.35M837.15 169.34H839.37M841.17 169.34H843.39M845.19 169.34H847.41M849.21 169.34H851.43M853.23 169.34H855.46M857.26 169.34H859.48M861.28 169.34H863.50M865.30 169.34H867.52M869.32 169.34H871.54M873.34 169.34H875.56M877.36 169.34H879.58M881.38 169.34H883.61M885.41 169.34H887.63M889.43 169.34H891.65M893.45 169.34H895.67M897.47 169.34H899.69M901.49 169.34H903.71M905.51 169.34H907.73M909.53 169.34H911.75M913.55 169.34H915.78M917.58 169.34H919.80M921.60 169.34H923.82" stroke="#c80000" stroke-width="0.62" fill="none"/>
<path d="M155.35 155.49H157.95M159.37 155.49H161.97M163.39 155.49H165.99M167.41 155.49H170.01M171.44 155.49H174.04M175.46 155.49H178.06M179.48 155.49H182.08M183.50 155.49H186.10M187.52 155.49H190.12M191.54 155.49H194.14M195.56 155.49H198.16M199.58 155.49H202.18M203.61 155.49H206.21M207.63 155.49H210.23M211.65 155.49H214.25M215.67 155.49H218.27M219.69 155.49H222.29M223.71 155.49H226.31M227.73 155.49H230.33M231.75 155.49H234.35M235.78 155.49H238.38M239.80 155.49H242.40M243.82 155.49H246.42M247.84 155.49H250.44M251.86 155.49H254.46M255.88 155.49H258.48M259.90 155.49H262.50M263.93 155.49H266.53M267.95 155.49H270.55M271.97 155.49H274.57M275.99 155.49H278.59M280.01 155.49H282.61M284.03 155.49H286.63M288.05 155.49H290.65M292.07 155.49H294.67M296.10 155.49H298.70M300.12 155.49H302.72M304.14 155.49H306.74M308.16 155.49H310.76M312.18 155.49H314.78M316.20 155.49H318.80M320.22 155.49H322.82M324.24 155.49H326.84M328.27 155.49H330.87M332.29 155.49H334.89M336.31 155.49H338.91M340.33 155.49H342.93M344.35 155.49H346.95M348.37 155.49H350.97M352.39 155.49H354.99M356.42 155.49H359.01M360.44 155.49H363.04M364.46 155.49H367.06M368.48 155.49H371.08M372.50 155.49H375.10M376.52 155.49H379.12M380.54 155.49H383.14M384.56 155.49H387.16M388.59 155.49H391.19M392.61 155.49H395.21M396.63 155.49H399.23M400.65 155.49H403.25M404.67 155.49H407.27M408.69 155.49H411.29M412.71 155.49H415.31M416.73 155.49H419.33M420.76 155.49H423.36M424.78 155.49H427.38M428.80 155.49H431.40M432.82 155.49H435.42M436.84 155.49H439.44M440.86 155.49H443.46M444.88 155.49H447.48M448.90 155.49H451.50M452.93 155.49H455.53M456.95 155.49H459.55M460.97 155.49H463.57M464.99 155.49H467.59M469.01 155.49H471.61M473.03 155.49H475.63M477.05 155.49H479.65M481.08 155.49H483.68M485.10 155.49H487.70M489.12 155.49H491.72M493.14 155.49H495.74M497.16 155.49H499.76M501.18 155.49H503.78M505.20 155.49H507.80M509.22 155.49H511.82M513.25 155.49H515.85M517.27 155.49H519.87M521.29 155.49H523.89M525.31 155.49H527.91M529.33 155.49H531.93M533.35 155.49H535.95M537.37 155.49H539.97M541.39 155.49H543.99M545.42 155.49H548.02M549.44 155.49H552.04M553.46 155.49H556.06M557.48 155.49H560.08M561.50 155.49H564.10M565.52 155.49H568.12M569.54 155.49H572.14M573.57 155.49H576.17M577.59 155.49H580.19M581.61 155.49H584.21M585.63 155.49H588.23M589.65 155.49H592.25M593.67 155.49H596.27M597.69 155.49H600.29M601.71 155.49H604.31M605.74 155.49H608.34M609.76 155.49H612.36M613.78 155.49H616.38M617.80 155.49H620.40M621.82 155.49H624.42M625.84 155.49H628.44M629.86 155.49H632.46M633.88 155.49H636.48M637.91 155.49H640.51M641.93 155.49H644.53M645.95 155.49H648.55M649.97 155.49H652.57M653.99 155.49H656.59M658.01 155.49H660.61M662.03 155.49H664.63M666.06 155.49H668.66M670.08 155.49H672.68M674.10 155.49H676.70M678.12 155.49H680.72M682.14 155.49H684.74M686.16 155.49H688.76M690.18 155.49H692.78M694.20 155.49H696.80M698.23 155.49H700.83M702.25 155.49H704.85M706.27 155.49H708.87M710.29 155.49H712.89M714.31 155.49H716.91M718.33 155.49H720.93M722.35 155.49H724.95M726.37 155.49H728.97M730.40 155.49H733.00M734.42 155.49H737.02M738.44 155.49H741.04M742.46 155.49H745.06M746.48 155.49H749.08M750.50 155.49H753.10M754.52 155.49H757.12M758.55 155.49H761.15M762.57 155.49H765.17M766.59 155.49H769.19M770.61 155.49H773.21M774.63 155.49H777.23M778.65 155.49H781.25M782.67 155.49H785.27M786.69 155.49H789.29M790.72 155.49H793.32M794.74 155.49H797.34M798.76 155.49H801.36M802.78 155.49H805.38M806.80 155.49H809.40M810.82 155.49H813.42M814.84 155.49H817.44M818.86 155.49H821.46M822.89 155.49H825.49M826.91 155.49H829.51M830.93 155.49H833.53M834.95 155.49H837.55M838.97 155.49H841.57M842.99 155.49H845.59M847.01 155.49H849.61M851.03 155.49H853.63M855.06 155.49H857.66M859.08 155.49H861.68M863.10 155.49H865.70M867.12 155.49H869.72M871.14 155.49H873.74M875.16 155.49H877.76M879.18 155.49H881.78M883.21 155.49H885.81M887.23 155.49H889.83M891.25 155.49H893.85M895.27 155.49H897.87M899.29 155.49H901.89M903.31 155.49H905.91M907.33 155.49H909.93M911.35 155.49H913.95M915.38 155.49H917.98M919.40 155.49H922.00M923.42 155.49H926.02" stroke="#00c000" stroke-width="0.62" fill="none"/>
<rect x="934.10" y="175.76" width="3.60" height="13.85" fill="#f0e6de" />
<path d="M934.10 175.76V189.61M937.70 175.76V189.61" stroke="#8a8a8a" stroke-width="0.62" fill="none"/>
<path d="M45.00 189.61H934.10M937.70 189.61H1012.80" stroke="#c80000" stroke-width="0.62" fill="none"/>
<path d="M934.10 175.76H937.70" stroke="#00c000" stroke-width="0.62" fill="none"/>
<path d="M45.00 209.88H1012.80" stroke="#c80000" stroke-width="0.62" fill="none"/>
<rect x="102.00" y="216.30" width="2.70" height="13.85" fill="#e6eddf" />
<path d="M102.00 216.30V230.15M104.70 216.30V230.15" stroke="#8a8a8a" stroke-width="0.62" fill="none"/>
<path d="M45.00 230.15H102.00M104.70 230.15H1012.80" stroke="#c80000" stroke-width="0.62" fill="none"/>
<path d="M102.00 216.30H104.70" stroke="#00c000" stroke-width="0.62" fill="none"/>
<rect x="45.00" y="236.57" width="6.60" height="13.85" fill="#e3e6ea" />
<rect x="58.30" y="236.57" width="6.60" height="13.85" fill="#e3e6ea" />
<rect x="71.36" y="236.57" width="6.60" height="13.85" fill="#e3e6ea" />
<rect x="84.42" y="236.57" width="6.60" height="13.85" fill="#e3e6ea" />
<rect x="97.48" y="236.57" width="6.60" height="13.85" fill="#e3e6ea" />
<rect x="110.54" y="236.57" width="6.60" height="13.85" fill="#e3e6ea" />
<rect x="123.60" y="236.57" width="6.60" height="13.85" fill="#e3e6ea" />
<rect x="136.66" y="236.57" width="6.60" height="13.85" fill="#e3e6ea" />
<rect x="149.72" y="236.57" width="6.60" height="13.85" fill="#e3e6ea" />
<rect x="162.78" y="236.57" width="6.60" height="13.85" fill="#e3e6ea" />
<rect x="175.84" y="236.57" width="6.60" height="13.85" fill="#e3e6ea" />
<rect x="188.90" y="236.57" width="6.60" height="13.85" fill="#e3e6ea" />
<rect x="201.96" y="236.57" width="6.60" height="13.85" fill="#e3e6ea" />
<rect x="215.02" y="236.57" width="6.60" height="13.85" fill="#e3e6ea" />
<rect x="228.08" y="236.57" width="6.60" height="13.85" fill="#e3e6ea" />
<rect x="241.14" y="236.57" width="6.60" height="13.85" fill="#e3e6ea" />
<rect x="254.20" y="236.57" width="6.60" height="13.85" fill="#e3e6ea" />
<rect x="267.26" y="236.57" width="6.60" height="13.85" fill="#e3e6ea" />
<rect x="280.32" y="236.57" width="6.60" height="13.85" fill="#e3e6ea" />
<rect x="293.38" y="236.57" width="6.60" height="13.85" fill="#e3e6ea" />
<rect x="306.44" y="236.57" width="6.60" height="13.85" fill="#e3e6ea" />
<rect x="319.50" y="236.57" width="6.60" height="13.85" fill="#e3e6ea" />
<rect x="332.56" y="236.57" width="6.60" height="13.85" fill="#e3e6ea" />
<rect x="345.62" y="236.57" width="6.60" height="13.85" fill="#e3e6ea" />
<rect x="358.68" y="236.57" width="6.60" height="13.85" fill="#e3e6ea" />
<rect x="371.74" y="236.57" width="6.60" height="13.85" fill="#e3e6ea" />
<rect x="384.80" y="236.57" width="6.60" height="13.85" fill="#e3e6ea" />
<rect x="397.86" y="236.57" width="6.60" height="13.85" fill="#e3e6ea" />
<rect x="410.92" y="236.57" width="6.60" height="13.85" fill="#e3e6ea" />
<rect x="423.98" y="236.57" width="6.60" height="13.85" fill="#e3e6ea" />
<rect x="437.04" y="236.57" width="6.60" height="13.85" fill="#e3e6ea" />
<rect x="450.10" y="236.57" width="6.60" height="13.85" fill="#e3e6ea" />
<rect x="463.16" y="236.57" width="6.60" height="13.85" fill="#e3e6ea" />
<rect x="476.22" y="236.57" width="6.60" height="13.85" fill="#e3e6ea" />
<rect x="489.28" y="236.57" width="6.60" height="13.85" fill="#e3e6ea" />
<rect x="502.34" y="236.57" width="6.60" height="13.85" fill="#e3e6ea" />
<rect x="515.40" y="236.57" width="6.60" height="13.85" fill="#e3e6ea" />
<rect x="528.46" y="236.57" width="6.60" height="13.85" fill="#e3e6ea" />
<rect x="541.52" y="236.57" width="6.60" height="13.85" fill="#e3e6ea" />
<rect x="554.58" y="236.57" width="6.60" height="13.85" fill="#e3e6ea" />
<rect x="567.64" y="236.57" width="6.60" height="13.85" fill="#e3e6ea" />
<rect x="580.70" y="236.57" width="6.60" height="13.85" fill="#e3e6ea" />
<rect x="593.76" y="236.57" width="6.60" height="13.85" fill="#e3e6ea" />
<rect x="606.82" y="236.57" width="6.60" height="13.85" fill="#e3e6ea" />
<rect x="619.88" y="236.57" width="6.60" height="13.85" fill="#e3e6ea" />
<rect x="632.94" y="236.57" width="6.60" height="13.85" fill="#e3e6ea" />
<rect x="646.00" y="236.57" width="6.60" height="13.85" fill="#e3e6ea" />
<rect x="659.06" y="236.57" width="6.60" height="13.85" fill="#e3e6ea" />
<rect x="672.12" y="236.57" width="6.60" height="13.85" fill="#e3e6ea" />
<rect x="685.18" y="236.57" width="6.60" height="13.85" fill="#e3e6ea" />
<rect x="698.24" y="236.57" width="6.60" height="13.85" fill="#e3e6ea" />
<rect x="711.30" y="236.57" width="6.60" height="13.85" fill="#e3e6ea" />
<rect x="724.36" y="236.57" width="6.60" height="13.85" fill="#e3e6ea" />
<rect x="737.42" y="236.57" width="6.60" height="13.85" fill="#e3e6ea" />
<rect x="750.48" y="236.57" width="6.60" height="13.85" fill="#e3e6ea" />
<rect x="763.54" y="236.57" width="6.60" height="13.85" fill="#e3e6ea" />
<rect x="776.60" y="236.57" width="6.60" height="13.85" fill="#e3e6ea" />
<rect x="789.66" y="236.57" width="6.60" height="13.85" fill="#e3e6ea" />
<rect x="802.72" y="236.57" width="6.60" height="13.85" fill="#e3e6ea" />
<rect x="815.78" y="236.57" width="6.60" height="13.85" fill="#e3e6ea" />
<rect x="828.84" y="236.57" width="6.60" height="13.85" fill="#e3e6ea" />
<rect x="841.90" y="236.57" width="6.60" height="13.85" fill="#e3e6ea" />
<rect x="854.96" y="236.57" width="6.60" height="13.85" fill="#e3e6ea" />
<rect x="868.02" y="236.57" width="6.60" height="13.85" fill="#e3e6ea" />
<rect x="881.08" y="236.57" width="6.60" height="13.85" fill="#e3e6ea" />
<rect x="894.14" y="236.57" width="6.60" height="13.85" fill="#e3e6ea" />
<rect x="907.20" y="236.57" width="6.60" height="13.85" fill="#e3e6ea" />
<rect x="920.26" y="236.57" width="6.60" height="13.85" fill="#e3e6ea" />
<rect x="933.32" y="236.57" width="6.60" height="13.85" fill="#e3e6ea" />
<rect x="946.38" y="236.57" width="6.60" height="13.85" fill="#e3e6ea" />
<rect x="959.44" y="236.57" width="6.60" height="13.85" fill="#e3e6ea" />
<rect x="972.50" y="236.57" width="6.60" height="13.85" fill="#e3e6ea" />
<rect x="985.56" y="236.57" width="6.60" height="13.85" fill="#e3e6ea" />
<rect x="998.62" y="236.57" width="6.60" height="13.85" fill="#e3e6ea" />
<rect x="1011.68" y="236.57" width="1.12" height="13.85" fill="#e3e6ea" />
<path d="M51.60 236.57V250.42M58.30 236.57V250.42M64.90 236.57V250.42M71.36 236.57V250.42M77.96 236.57V250.42M84.42 236.57V250.42M91.02 236.57V250.42M97.48 236.57V250.42M104.08 236.57V250.42M110.54 236.57V250.42M117.14 236.57V250.42M123.60 236.57V250.42M130.20 236.57V250.42M136.66 236.57V250.42M143.26 236.57V250.42M149.72 236.57V250.42M156.32 236.57V250.42M162.78 236.57V250.42M169.38 236.57V250.42M175.84 236.57V250.42M182.44 236.57V250.42M188.90 236.57V250.42M195.50 236.57V250.42M201.96 236.57V250.42M208.56 236.57V250.42M215.02 236.57V250.42M221.62 236.57V250.42M228.08 236.57V250.42M234.68 236.57V250.42M241.14 236.57V250.42M247.74 236.57V250.42M254.20 236.57V250.42M260.80 236.57V250.42M267.26 236.57V250.42M273.86 236.57V250.42M280.32 236.57V250.42M286.92 236.57V250.42M293.38 236.57V250.42M299.98 236.57V250.42M306.44 236.57V250.42M313.04 236.57V250.42M319.50 236.57V250.42M326.10 236.57V250.42M332.56 236.57V250.42M339.16 236.57V250.42M345.62 236.57V250.42M352.22 236.57V250.42M358.68 236.57V250.42M365.28 236.57V250.42M371.74 236.57V250.42M378.34 236.57V250.42M384.80 236.57V250.42M391.40 236.57V250.42M397.86 236.57V250.42M404.46 236.57V250.42M410.92 236.57V250.42M417.52 236.57V250.42M423.98 236.57V250.42M430.58 236.57V250.42M437.04 236.57V250.42M443.64 236.57V250.42M450.10 236.57V250.42M456.70 236.57V250.42M463.16 236.57V250.42M469.76 236.57V250.42M476.22 236.57V250.42M482.82 236.57V250.42M489.28 236.57V250.42M495.88 236.57V250.42M502.34 236.57V250.42M508.94 236.57V250.42M515.40 236.57V250.42M522.00 236.57V250.42M528.46 236.57V250.42M535.06 236.57V250.42M541.52 236.57V250.42M548.12 236.57V250.42M554.58 236.57V250.42M561.18 236.57V250.42M567.64 236.57V250.42M574.24 236.57V250.42M580.70 236.57V250.42M587.30 236.57V250.42M593.76 236.57V250.42M600.36 236.57V250.42M606.82 236.57V250.42M613.42 236.57V250.42M619.88 236.57V250.42M626.48 236.57V250.42M632.94 236.57V250.42M639.54 236.57V250.42M646.00 236.57V250.42M652.60 236.57V250.42M659.06 236.57V250.42M665.66 236.57V250.42M672.12 236.57V250.42M678.72 236.57V250.42M685.18 236.57V250.42M691.78 236.57V250.42M698.24 236.57V250.42M704.84 236.57V250.42M711.30 236.57V250.42M717.90 236.57V250.42M724.36 236.57V250.42M730.96 236.57V250.42M737.42 236.57V250.42M744.02 236.57V250.42M750.48 236.57V250.42M757.08 236.57V250.42M763.54 236.57V250.42M770.14 236.57V250.42M776.60 236.57V250.42M783.20 236.57V250.42M789.66 236.57V250.42M796.26 236.57V250.42M802.72 236.57V250.42M809.32 236.57V250.42M815.78 236.57V250.42M822.38 236.57V250.42M828.84 236.57V250.42M835.44 236.57V250.42M841.90 236.57V250.42M848.50 236.57V250.42M854.96 236.57V250.42M861.56 236.57V250.42M868.02 236.57V250.42M874.62 236.57V250.42M881.08 236.57V250.42M887.68 236.57V250.42M894.14 236.57V250.42M900.74 236.57V250.42M907.20 236.57V250.42M913.80 236.57V250.42M920.26 236.57V250.42M926.86 236.57V250.42M933.32 236.57V250.42M939.92 236.57V250.42M946.38 236.57V250.42M952.98 236.57V250.42M959.44 236.57V250.42M966.04 236.57V250.42M972.50 236.57V250.42M979.10 236.57V250.42M985.56 236.57V250.42M992.16 236.57V250.42M998.62 236.57V250.42M1005.22 236.57V250.42M1011.68 236.57V250.42" stroke="#8a8a8a" stroke-width="0.62" fill="none"/>
<path d="M51.60 250.42H58.30M64.90 250.42H71.36M77.96 250.42H84.42M91.02 250.42H97.48M104.08 250.42H110.54M117.14 250.42H123.60M130.20 250.42H136.66M143.26 250.42H149.72M156.32 250.42H162.78M169.38 250.42H175.84M182.44 250.42H188.90M195.50 250.42H201.96M208.56 250.42H215.02M221.62 250.42H228.08M234.68 250.42H241.14M247.74 250.42H254.20M260.80 250.42H267.26M273.86 250.42H280.32M286.92 250.42H293.38M299.98 250.42H306.44M313.04 250.42H319.50M326.10 250.42H332.56M339.16 250.42H345.62M352.22 250.42H358.68M365.28 250.42H371.74M378.34 250.42H384.80M391.40 250.42H397.86M404.46 250.42H410.92M417.52 250.42H423.98M430.58 250.42H437.04M443.64 250.42H450.10M456.70 250.42H463.16M469.76 250.42H476.22M482.82 250.42H489.28M495.88 250.42H502.34M508.94 250.42H515.40M522.00 250.42H528.46M535.06 250.42H541.52M548.12 250.42H554.58M561.18 250.42H567.64M574.24 250.42H580.70M587.30 250.42H593.76M600.36 250.42H606.82M613.42 250.42H619.88M626.48 250.42H632.94M639.54 250.42H646.00M652.60 250.42H659.06M665.66 250.42H672.12M678.72 250.42H685.18M691.78 250.42H698.24M704.84 250.42H711.30M717.90 250.42H724.36M730.96 250.42H737.42M744.02 250.42H750.48M757.08 250.42H763.54M770.14 250.42H776.60M783.20 250.42H789.66M796.26 250.42H802.72M809.32 250.42H815.78M822.38 250.42H828.84M835.44 250.42H841.90M848.50 250.42H854.96M861.56 250.42H868.02M874.62 250.42H881.08M887.68 250.42H894.14M900.74 250.42H907.20M913.80 250.42H920.26M926.86 250.42H933.32M939.92 250.42H946.38M952.98 250.42H959.44M966.04 250.42H972.50M979.10 250.42H985.56M992.16 250.42H998.62M1005.22 250.42H1011.68" stroke="#c80000" stroke-width="0.62" fill="none"/>
<path d="M45.00 236.57H51.60M58.30 236.57H64.90M71.36 236.57H77.96M84.42 236.57H91.02M97.48 236.57H104.08M110.54 236.57H117.14M123.60 236.57H130.20M136.66 236.57H143.26M149.72 236.57H156.32M162.78 236.57H169.38M175.84 236.57H182.44M188.90 236.57H195.50M201.96 236.57H208.56M215.02 236.57H221.62M228.08 236.57H234.68M241.14 236.57H247.74M254.20 236.57H260.80M267.26 236.57H273.86M280.32 236.57H286.92M293.38 236.57H299.98M306.44 236.57H313.04M319.50 236.57H326.10M332.56 236.57H339.16M345.62 236.57H352.22M358.68 236.57H365.28M371.74 236.57H378.34M384.80 236.57H391.40M397.86 236.57H404.46M410.92 236.57H417.52M423.98 236.57H430.58M437.04 236.57H443.64M450.10 236.57H456.70M463.16 236.57H469.76M476.22 236.57H482.82M489.28 236.57H495.88M502.34 236.57H508.94M515.40 236.57H522.00M528.46 236.57H535.06M541.52 236.57H548.12M554.58 236.57H561.18M567.64 236.57H574.24M580.70 236.57H587.30M593.76 236.57H600.36M606.82 236.57H613.42M619.88 236.57H626.48M632.94 236.57H639.54M646.00 236.57H652.60M659.06 236.57H665.66M672.12 236.57H678.72M685.18 236.57H691.78M698.24 236.57H704.84M711.30 236.57H717.90M724.36 236.57H730.96M737.42 236.57H744.02M750.48 236.57H757.08M763.54 236.57H770.14M776.60 236.57H783.20M789.66 236.57H796.26M802.72 236.57H809.32M815.78 236.57H822.38M828.84 236.57H835.44M841.90 236.57H848.50M854.96 236.57H861.56M868.02 236.57H874.62M881.08 236.57H887.68M894.14 236.57H900.74M907.20 236.57H913.80M920.26 236.57H926.86M933.32 236.57H939.92M946.38 236.57H952.98M959.44 236.57H966.04M972.50 236.57H979.10M985.56 236.57H992.16M998.62 236.57H1005.22M1011.68 236.57H1012.80" stroke="#00c000" stroke-width="0.62" fill="none"/>
<rect x="308.50" y="256.84" width="36.30" height="13.85" fill="#e8e5e8" />
<rect x="441.40" y="256.84" width="96.10" height="13.85" fill="#e8e5e8" />
<rect x="778.80" y="256.84" width="48.70" height="13.85" fill="#e8e5e8" />
<rect x="875.70" y="256.84" width="48.20" height="13.85" fill="#e8e5e8" />
<path d="M308.50 256.84V270.69M344.80 256.84V270.69M441.40 256.84V270.69M537.50 256.84V270.69M778.80 256.84V270.69M827.50 256.84V270.69M875.70 256.84V270.69M923.90 256.84V270.69" stroke="#8a8a8a" stroke-width="0.62" fill="none"/>
<path d="M45.00 270.69H308.50M344.80 270.69H441.40M537.50 270.69H778.80M827.50 270.69H875.70M923.90 270.69H1012.80" stroke="#c80000" stroke-width="0.62" fill="none"/>
<path d="M308.50 256.84H344.80M441.40 256.84H537.50M778.80 256.84H827.50M875.70 256.84H923.90" stroke="#00c000" stroke-width="0.62" fill="none"/>
<path d="M45.39 284.15L47.49 279.65H56.05L58.15 284.15L56.05 288.65H47.49Z" fill="#6ce66c" stroke="#48b448" stroke-width="0.7" stroke-linejoin="round"/>
<path d="M58.45 284.15L60.55 279.65H69.11L71.21 284.15L69.11 288.65H60.55Z" fill="#6ce66c" stroke="#48b448" stroke-width="0.7" stroke-linejoin="round"/>
<path d="M71.51 284.15L73.61 279.65H82.17L84.27 284.15L82.17 288.65H73.61Z" fill="#6ce66c" stroke="#48b448" stroke-width="0.7" stroke-linejoin="round"/>
<path d="M84.57 284.15L86.67 279.65H95.23L97.33 284.15L95.23 288.65H86.67Z" fill="#6ce66c" stroke="#48b448" stroke-width="0.7" stroke-linejoin="round"/>
<line x1="98.08" y1="284.15" x2="101.80" y2="284.15" stroke="#cfcfcf" stroke-width="0.55" />
<path d="M102.35 284.15L104.45 279.65H108.29L110.39 284.15L108.29 288.65H104.45Z" fill="#6ce66c" stroke="#48b448" stroke-width="0.7" stroke-linejoin="round"/>
<text x="106.37" y="286.75" font-size="6.3" fill="#143c14" text-anchor="middle" textLength="3.10" lengthAdjust="spacingAndGlyphs" >1</text>
<path d="M110.69 284.15L112.79 279.65H121.35L123.45 284.15L121.35 288.65H112.79Z" fill="#6ce66c" stroke="#48b448" stroke-width="0.7" stroke-linejoin="round"/>
<text x="117.07" y="286.75" font-size="6.3" fill="#143c14" text-anchor="middle" textLength="3.10" lengthAdjust="spacingAndGlyphs" >2</text>
<path d="M123.75 284.15L125.85 279.65H134.41L136.51 284.15L134.41 288.65H125.85Z" fill="#6ce66c" stroke="#48b448" stroke-width="0.7" stroke-linejoin="round"/>
<text x="130.13" y="286.75" font-size="6.3" fill="#143c14" text-anchor="middle" textLength="3.10" lengthAdjust="spacingAndGlyphs" >3</text>
<path d="M136.81 284.15L138.91 279.65H147.47L149.57 284.15L147.47 288.65H138.91Z" fill="#6ce66c" stroke="#48b448" stroke-width="0.7" stroke-linejoin="round"/>
<text x="143.19" y="286.75" font-size="6.3" fill="#143c14" text-anchor="middle" textLength="3.10" lengthAdjust="spacingAndGlyphs" >4</text>
<path d="M149.87 284.15L151.97 279.65H160.53L162.63 284.15L160.53 288.65H151.97Z" fill="#6ce66c" stroke="#48b448" stroke-width="0.7" stroke-linejoin="round"/>
<text x="156.25" y="286.75" font-size="6.3" fill="#143c14" text-anchor="middle" textLength="3.10" lengthAdjust="spacingAndGlyphs" >5</text>
<path d="M162.93 284.15L165.03 279.65H173.59L175.69 284.15L173.59 288.65H165.03Z" fill="#6ce66c" stroke="#48b448" stroke-width="0.7" stroke-linejoin="round"/>
<text x="169.31" y="286.75" font-size="6.3" fill="#143c14" text-anchor="middle" textLength="3.10" lengthAdjust="spacingAndGlyphs" >6</text>
<path d="M175.99 284.15L178.09 279.65H186.65L188.75 284.15L186.65 288.65H178.09Z" fill="#6ce66c" stroke="#48b448" stroke-width="0.7" stroke-linejoin="round"/>
<text x="182.37" y="286.75" font-size="6.3" fill="#143c14" text-anchor="middle" textLength="3.10" lengthAdjust="spacingAndGlyphs" >7</text>
<path d="M189.05 284.15L191.15 279.65H199.71L201.81 284.15L199.71 288.65H191.15Z" fill="#6ce66c" stroke="#48b448" stroke-width="0.7" stroke-linejoin="round"/>
<text x="195.43" y="286.75" font-size="6.3" fill="#143c14" text-anchor="middle" textLength="3.10" lengthAdjust="spacingAndGlyphs" >8</text>
<path d="M202.11 284.15L204.21 279.65H212.77L214.87 284.15L212.77 288.65H204.21Z" fill="#6ce66c" stroke="#48b448" stroke-width="0.7" stroke-linejoin="round"/>
<text x="208.49" y="286.75" font-size="6.3" fill="#143c14" text-anchor="middle" textLength="3.10" lengthAdjust="spacingAndGlyphs" >9</text>
<path d="M215.17 284.15L217.27 279.65H225.83L227.93 284.15L225.83 288.65H217.27Z" fill="#6ce66c" stroke="#48b448" stroke-width="0.7" stroke-linejoin="round"/>
<text x="221.55" y="286.75" font-size="6.3" fill="#143c14" text-anchor="middle" textLength="6.20" lengthAdjust="spacingAndGlyphs" >10</text>
<path d="M228.23 284.15L230.33 279.65H238.89L240.99 284.15L238.89 288.65H230.33Z" fill="#6ce66c" stroke="#48b448" stroke-width="0.7" stroke-linejoin="round"/>
<text x="234.61" y="286.75" font-size="6.3" fill="#143c14" text-anchor="middle" textLength="6.20" lengthAdjust="spacingAndGlyphs" >11</text>
<path d="M241.29 284.15L243.39 279.65H251.95L254.05 284.15L251.95 288.65H243.39Z" fill="#6ce66c" stroke="#48b448" stroke-width="0.7" stroke-linejoin="round"/>
<text x="247.67" y="286.75" font-size="6.3" fill="#143c14" text-anchor="middle" textLength="6.20" lengthAdjust="spacingAndGlyphs" >12</text>
<path d="M254.35 284.15L256.45 279.65H265.01L267.11 284.15L265.01 288.65H256.45Z" fill="#6ce66c" stroke="#48b448" stroke-width="0.7" stroke-linejoin="round"/>
<text x="260.73" y="286.75" font-size="6.3" fill="#143c14" text-anchor="middle" textLength="6.20" lengthAdjust="spacingAndGlyphs" >13</text>
<path d="M267.41 284.15L269.51 279.65H278.07L280.17 284.15L278.07 288.65H269.51Z" fill="#6ce66c" stroke="#48b448" stroke-width="0.7" stroke-linejoin="round"/>
<text x="273.79" y="286.75" font-size="6.3" fill="#143c14" text-anchor="middle" textLength="6.20" lengthAdjust="spacingAndGlyphs" >14</text>
<path d="M280.47 284.15L282.57 279.65H291.13L293.23 284.15L291.13 288.65H282.57Z" fill="#6ce66c" stroke="#48b448" stroke-width="0.7" stroke-linejoin="round"/>
<text x="286.85" y="286.75" font-size="6.3" fill="#143c14" text-anchor="middle" textLength="6.20" lengthAdjust="spacingAndGlyphs" >15</text>
<path d="M293.53 284.15L295.63 279.65H304.19L306.29 284.15L304.19 288.65H295.63Z" fill="#6ce66c" stroke="#48b448" stroke-width="0.7" stroke-linejoin="round"/>
<text x="299.91" y="286.75" font-size="6.3" fill="#143c14" text-anchor="middle" textLength="6.20" lengthAdjust="spacingAndGlyphs" >16</text>
<path d="M306.59 284.15L308.69 279.65H317.25L319.35 284.15L317.25 288.65H308.69Z" fill="#6ce66c" stroke="#48b448" stroke-width="0.7" stroke-linejoin="round"/>
<text x="312.97" y="286.75" font-size="6.3" fill="#143c14" text-anchor="middle" textLength="6.20" lengthAdjust="spacingAndGlyphs" >17</text>
<path d="M319.65 284.15L321.75 279.65H330.31L332.41 284.15L330.31 288.65H321.75Z" fill="#6ce66c" stroke="#48b448" stroke-width="0.7" stroke-linejoin="round"/>
<text x="326.03" y="286.75" font-size="6.3" fill="#143c14" text-anchor="middle" textLength="6.20" lengthAdjust="spacingAndGlyphs" >18</text>
<path d="M332.71 284.15L334.81 279.65H343.37L345.47 284.15L343.37 288.65H334.81Z" fill="#6ce66c" stroke="#48b448" stroke-width="0.7" stroke-linejoin="round"/>
<text x="339.09" y="286.75" font-size="6.3" fill="#143c14" text-anchor="middle" textLength="6.20" lengthAdjust="spacingAndGlyphs" >19</text>
<path d="M345.77 284.15L347.87 279.65H356.43L358.53 284.15L356.43 288.65H347.87Z" fill="#6ce66c" stroke="#48b448" stroke-width="0.7" stroke-linejoin="round"/>
<text x="352.15" y="286.75" font-size="6.3" fill="#143c14" text-anchor="middle" textLength="6.20" lengthAdjust="spacingAndGlyphs" >20</text>
<path d="M358.83 284.15L360.93 279.65H369.49L371.59 284.15L369.49 288.65H360.93Z" fill="#6ce66c" stroke="#48b448" stroke-width="0.7" stroke-linejoin="round"/>
<text x="365.21" y="286.75" font-size="6.3" fill="#143c14" text-anchor="middle" textLength="6.20" lengthAdjust="spacingAndGlyphs" >21</text>
<path d="M371.89 284.15L373.99 279.65H382.55L384.65 284.15L382.55 288.65H373.99Z" fill="#6ce66c" stroke="#48b448" stroke-width="0.7" stroke-linejoin="round"/>
<text x="378.27" y="286.75" font-size="6.3" fill="#143c14" text-anchor="middle" textLength="6.20" lengthAdjust="spacingAndGlyphs" >22</text>
<path d="M384.95 284.15L387.05 279.65H395.61L397.71 284.15L395.61 288.65H387.05Z" fill="#6ce66c" stroke="#48b448" stroke-width="0.7" stroke-linejoin="round"/>
<text x="391.33" y="286.75" font-size="6.3" fill="#143c14" text-anchor="middle" textLength="6.20" lengthAdjust="spacingAndGlyphs" >23</text>
<path d="M398.01 284.15L400.11 279.65H408.67L410.77 284.15L408.67 288.65H400.11Z" fill="#6ce66c" stroke="#48b448" stroke-width="0.7" stroke-linejoin="round"/>
<text x="404.39" y="286.75" font-size="6.3" fill="#143c14" text-anchor="middle" textLength="6.20" lengthAdjust="spacingAndGlyphs" >24</text>
<path d="M411.07 284.15L413.17 279.65H421.73L423.83 284.15L421.73 288.65H413.17Z" fill="#6ce66c" stroke="#48b448" stroke-width="0.7" stroke-linejoin="round"/>
<text x="417.45" y="286.75" font-size="6.3" fill="#143c14" text-anchor="middle" textLength="6.20" lengthAdjust="spacingAndGlyphs" >25</text>
<path d="M424.13 284.15L426.23 279.65H434.79L436.89 284.15L434.79 288.65H426.23Z" fill="#6ce66c" stroke="#48b448" stroke-width="0.7" stroke-linejoin="round"/>
<text x="430.51" y="286.75" font-size="6.3" fill="#143c14" text-anchor="middle" textLength="6.20" lengthAdjust="spacingAndGlyphs" >26</text>
<path d="M437.19 284.15L439.29 279.65H447.85L449.95 284.15L447.85 288.65H439.29Z" fill="#6ce66c" stroke="#48b448" stroke-width="0.7" stroke-linejoin="round"/>
<text x="443.57" y="286.75" font-size="6.3" fill="#143c14" text-anchor="middle" textLength="6.20" lengthAdjust="spacingAndGlyphs" >27</text>
<path d="M450.25 284.15L452.35 279.65H460.91L463.01 284.15L460.91 288.65H452.35Z" fill="#6ce66c" stroke="#48b448" stroke-width="0.7" stroke-linejoin="round"/>
<text x="456.63" y="286.75" font-size="6.3" fill="#143c14" text-anchor="middle" textLength="6.20" lengthAdjust="spacingAndGlyphs" >28</text>
<path d="M463.31 284.15L465.41 279.65H473.97L476.07 284.15L473.97 288.65H465.41Z" fill="#6ce66c" stroke="#48b448" stroke-width="0.7" stroke-linejoin="round"/>
<text x="469.69" y="286.75" font-size="6.3" fill="#143c14" text-anchor="middle" textLength="6.20" lengthAdjust="spacingAndGlyphs" >29</text>
<path d="M476.37 284.15L478.47 279.65H487.03L489.13 284.15L487.03 288.65H478.47Z" fill="#6ce66c" stroke="#48b448" stroke-width="0.7" stroke-linejoin="round"/>
<text x="482.75" y="286.75" font-size="6.3" fill="#143c14" text-anchor="middle" textLength="6.20" lengthAdjust="spacingAndGlyphs" >30</text>
<path d="M489.43 284.15L491.53 279.65H500.09L502.19 284.15L500.09 288.65H491.53Z" fill="#6ce66c" stroke="#48b448" stroke-width="0.7" stroke-linejoin="round"/>
<text x="495.81" y="286.75" font-size="6.3" fill="#143c14" text-anchor="middle" textLength="6.20" lengthAdjust="spacingAndGlyphs" >31</text>
<path d="M502.49 284.15L504.59 279.65H513.15L515.25 284.15L513.15 288.65H504.59Z" fill="#6ce66c" stroke="#48b448" stroke-width="0.7" stroke-linejoin="round"/>
<text x="508.87" y="286.75" font-size="6.3" fill="#143c14" text-anchor="middle" textLength="6.20" lengthAdjust="spacingAndGlyphs" >32</text>
<path d="M515.55 284.15L517.65 279.65H526.21L528.31 284.15L526.21 288.65H517.65Z" fill="#6ce66c" stroke="#48b448" stroke-width="0.7" stroke-linejoin="round"/>
<text x="521.93" y="286.75" font-size="6.3" fill="#143c14" text-anchor="middle" textLength="6.20" lengthAdjust="spacingAndGlyphs" >33</text>
<path d="M528.61 284.15L530.71 279.65H539.27L541.37 284.15L539.27 288.65H530.71Z" fill="#6ce66c" stroke="#48b448" stroke-width="0.7" stroke-linejoin="round"/>
<text x="534.99" y="286.75" font-size="6.3" fill="#143c14" text-anchor="middle" textLength="6.20" lengthAdjust="spacingAndGlyphs" >34</text>
<path d="M541.67 284.15L543.77 279.65H552.33L554.43 284.15L552.33 288.65H543.77Z" fill="#6ce66c" stroke="#48b448" stroke-width="0.7" stroke-linejoin="round"/>
<text x="548.05" y="286.75" font-size="6.3" fill="#143c14" text-anchor="middle" textLength="6.20" lengthAdjust="spacingAndGlyphs" >35</text>
<path d="M554.73 284.15L556.83 279.65H565.39L567.49 284.15L565.39 288.65H556.83Z" fill="#6ce66c" stroke="#48b448" stroke-width="0.7" stroke-linejoin="round"/>
<text x="561.11" y="286.75" font-size="6.3" fill="#143c14" text-anchor="middle" textLength="6.20" lengthAdjust="spacingAndGlyphs" >36</text>
<path d="M567.79 284.15L569.89 279.65H578.45L580.55 284.15L578.45 288.65H569.89Z" fill="#6ce66c" stroke="#48b448" stroke-width="0.7" stroke-linejoin="round"/>
<text x="574.17" y="286.75" font-size="6.3" fill="#143c14" text-anchor="middle" textLength="6.20" lengthAdjust="spacingAndGlyphs" >37</text>
<path d="M580.85 284.15L582.95 279.65H591.51L593.61 284.15L591.51 288.65H582.95Z" fill="#6ce66c" stroke="#48b448" stroke-width="0.7" stroke-linejoin="round"/>
<text x="587.23" y="286.75" font-size="6.3" fill="#143c14" text-anchor="middle" textLength="6.20" lengthAdjust="spacingAndGlyphs" >38</text>
<path d="M593.91 284.15L596.01 279.65H604.57L606.67 284.15L604.57 288.65H596.01Z" fill="#6ce66c" stroke="#48b448" stroke-width="0.7" stroke-linejoin="round"/>
<text x="600.29" y="286.75" font-size="6.3" fill="#143c14" text-anchor="middle" textLength="6.20" lengthAdjust="spacingAndGlyphs" >39</text>
<path d="M606.97 284.15L609.07 279.65H617.63L619.73 284.15L617.63 288.65H609.07Z" fill="#6ce66c" stroke="#48b448" stroke-width="0.7" stroke-linejoin="round"/>
<text x="613.35" y="286.75" font-size="6.3" fill="#143c14" text-anchor="middle" textLength="6.20" lengthAdjust="spacingAndGlyphs" >40</text>
<path d="M620.03 284.15L622.13 279.65H630.69L632.79 284.15L630.69 288.65H622.13Z" fill="#6ce66c" stroke="#48b448" stroke-width="0.7" stroke-linejoin="round"/>
<text x="626.41" y="286.75" font-size="6.3" fill="#143c14" text-anchor="middle" textLength="6.20" lengthAdjust="spacingAndGlyphs" >41</text>
<path d="M633.09 284.15L635.19 279.65H643.75L645.85 284.15L643.75 288.65H635.19Z" fill="#6ce66c" stroke="#48b448" stroke-width="0.7" stroke-linejoin="round"/>
<text x="639.47" y="286.75" font-size="6.3" fill="#143c14" text-anchor="middle" textLength="6.20" lengthAdjust="spacingAndGlyphs" >42</text>
<path d="M646.15 284.15L648.25 279.65H656.81L658.91 284.15L656.81 288.65H648.25Z" fill="#6ce66c" stroke="#48b448" stroke-width="0.7" stroke-linejoin="round"/>
<text x="652.53" y="286.75" font-size="6.3" fill="#143c14" text-anchor="middle" textLength="6.20" lengthAdjust="spacingAndGlyphs" >43</text>
<path d="M659.21 284.15L661.31 279.65H669.87L671.97 284.15L669.87 288.65H661.31Z" fill="#6ce66c" stroke="#48b448" stroke-width="0.7" stroke-linejoin="round"/>
<text x="665.59" y="286.75" font-size="6.3" fill="#143c14" text-anchor="middle" textLength="6.20" lengthAdjust="spacingAndGlyphs" >44</text>
<path d="M672.27 284.15L674.37 279.65H682.93L685.03 284.15L682.93 288.65H674.37Z" fill="#6ce66c" stroke="#48b448" stroke-width="0.7" stroke-linejoin="round"/>
<text x="678.65" y="286.75" font-size="6.3" fill="#143c14" text-anchor="middle" textLength="6.20" lengthAdjust="spacingAndGlyphs" >45</text>
<path d="M685.33 284.15L687.43 279.65H695.99L698.09 284.15L695.99 288.65H687.43Z" fill="#6ce66c" stroke="#48b448" stroke-width="0.7" stroke-linejoin="round"/>
<text x="691.71" y="286.75" font-size="6.3" fill="#143c14" text-anchor="middle" textLength="6.20" lengthAdjust="spacingAndGlyphs" >46</text>
<path d="M698.39 284.15L700.49 279.65H709.05L711.15 284.15L709.05 288.65H700.49Z" fill="#6ce66c" stroke="#48b448" stroke-width="0.7" stroke-linejoin="round"/>
<text x="704.77" y="286.75" font-size="6.3" fill="#143c14" text-anchor="middle" textLength="6.20" lengthAdjust="spacingAndGlyphs" >47</text>
<path d="M711.45 284.15L713.55 279.65H722.11L724.21 284.15L722.11 288.65H713.55Z" fill="#6ce66c" stroke="#48b448" stroke-width="0.7" stroke-linejoin="round"/>
<text x="717.83" y="286.75" font-size="6.3" fill="#143c14" text-anchor="middle" textLength="6.20" lengthAdjust="spacingAndGlyphs" >48</text>
<path d="M724.51 284.15L726.61 279.65H735.17L737.27 284.15L735.17 288.65H726.61Z" fill="#6ce66c" stroke="#48b448" stroke-width="0.7" stroke-linejoin="round"/>
<text x="730.89" y="286.75" font-size="6.3" fill="#143c14" text-anchor="middle" textLength="6.20" lengthAdjust="spacingAndGlyphs" >49</text>
<path d="M737.57 284.15L739.67 279.65H748.23L750.33 284.15L748.23 288.65H739.67Z" fill="#6ce66c" stroke="#48b448" stroke-width="0.7" stroke-linejoin="round"/>
<text x="743.95" y="286.75" font-size="6.3" fill="#143c14" text-anchor="middle" textLength="6.20" lengthAdjust="spacingAndGlyphs" >50</text>
<path d="M750.63 284.15L752.73 279.65H761.29L763.39 284.15L761.29 288.65H752.73Z" fill="#6ce66c" stroke="#48b448" stroke-width="0.7" stroke-linejoin="round"/>
<text x="757.01" y="286.75" font-size="6.3" fill="#143c14" text-anchor="middle" textLength="6.20" lengthAdjust="spacingAndGlyphs" >51</text>
<path d="M763.69 284.15L765.79 279.65H774.35L776.45 284.15L774.35 288.65H765.79Z" fill="#6ce66c" stroke="#48b448" stroke-width="0.7" stroke-linejoin="round"/>
<text x="770.07" y="286.75" font-size="6.3" fill="#143c14" text-anchor="middle" textLength="6.20" lengthAdjust="spacingAndGlyphs" >52</text>
<path d="M776.75 284.15L778.85 279.65H787.41L789.51 284.15L787.41 288.65H778.85Z" fill="#6ce66c" stroke="#48b448" stroke-width="0.7" stroke-linejoin="round"/>
<text x="783.13" y="286.75" font-size="6.3" fill="#143c14" text-anchor="middle" textLength="6.20" lengthAdjust="spacingAndGlyphs" >53</text>
<path d="M789.81 284.15L791.91 279.65H800.47L802.57 284.15L800.47 288.65H791.91Z" fill="#6ce66c" stroke="#48b448" stroke-width="0.7" stroke-linejoin="round"/>
<text x="796.19" y="286.75" font-size="6.3" fill="#143c14" text-anchor="middle" textLength="6.20" lengthAdjust="spacingAndGlyphs" >54</text>
<path d="M802.87 284.15L804.97 279.65H813.53L815.63 284.15L813.53 288.65H804.97Z" fill="#6ce66c" stroke="#48b448" stroke-width="0.7" stroke-linejoin="round"/>
<text x="809.25" y="286.75" font-size="6.3" fill="#143c14" text-anchor="middle" textLength="6.20" lengthAdjust="spacingAndGlyphs" >55</text>
<path d="M815.93 284.15L818.03 279.65H826.59L828.69 284.15L826.59 288.65H818.03Z" fill="#6ce66c" stroke="#48b448" stroke-width="0.7" stroke-linejoin="round"/>
<text x="822.31" y="286.75" font-size="6.3" fill="#143c14" text-anchor="middle" textLength="6.20" lengthAdjust="spacingAndGlyphs" >56</text>
<path d="M828.99 284.15L831.09 279.65H839.65L841.75 284.15L839.65 288.65H831.09Z" fill="#6ce66c" stroke="#48b448" stroke-width="0.7" stroke-linejoin="round"/>
<text x="835.37" y="286.75" font-size="6.3" fill="#143c14" text-anchor="middle" textLength="6.20" lengthAdjust="spacingAndGlyphs" >57</text>
<path d="M842.05 284.15L844.15 279.65H852.71L854.81 284.15L852.71 288.65H844.15Z" fill="#6ce66c" stroke="#48b448" stroke-width="0.7" stroke-linejoin="round"/>
<text x="848.43" y="286.75" font-size="6.3" fill="#143c14" text-anchor="middle" textLength="6.20" lengthAdjust="spacingAndGlyphs" >58</text>
<path d="M855.11 284.15L857.21 279.65H865.77L867.87 284.15L865.77 288.65H857.21Z" fill="#6ce66c" stroke="#48b448" stroke-width="0.7" stroke-linejoin="round"/>
<text x="861.49" y="286.75" font-size="6.3" fill="#143c14" text-anchor="middle" textLength="6.20" lengthAdjust="spacingAndGlyphs" >59</text>
<path d="M868.17 284.15L870.27 279.65H878.83L880.93 284.15L878.83 288.65H870.27Z" fill="#6ce66c" stroke="#48b448" stroke-width="0.7" stroke-linejoin="round"/>
<text x="874.55" y="286.75" font-size="6.3" fill="#143c14" text-anchor="middle" textLength="6.20" lengthAdjust="spacingAndGlyphs" >60</text>
<path d="M881.23 284.15L883.33 279.65H891.89L893.99 284.15L891.89 288.65H883.33Z" fill="#6ce66c" stroke="#48b448" stroke-width="0.7" stroke-linejoin="round"/>
<text x="887.61" y="286.75" font-size="6.3" fill="#143c14" text-anchor="middle" textLength="6.20" lengthAdjust="spacingAndGlyphs" >61</text>
<path d="M894.29 284.15L896.39 279.65H904.95L907.05 284.15L904.95 288.65H896.39Z" fill="#6ce66c" stroke="#48b448" stroke-width="0.7" stroke-linejoin="round"/>
<text x="900.67" y="286.75" font-size="6.3" fill="#143c14" text-anchor="middle" textLength="6.20" lengthAdjust="spacingAndGlyphs" >62</text>
<path d="M907.35 284.15L909.45 279.65H918.01L920.11 284.15L918.01 288.65H909.45Z" fill="#6ce66c" stroke="#48b448" stroke-width="0.7" stroke-linejoin="round"/>
<text x="913.73" y="286.75" font-size="6.3" fill="#143c14" text-anchor="middle" textLength="6.20" lengthAdjust="spacingAndGlyphs" >63</text>
<path d="M920.41 284.15L922.51 279.65H931.07L933.17 284.15L931.07 288.65H922.51Z" fill="#6ce66c" stroke="#48b448" stroke-width="0.7" stroke-linejoin="round"/>
<text x="926.79" y="286.75" font-size="6.3" fill="#143c14" text-anchor="middle" textLength="6.20" lengthAdjust="spacingAndGlyphs" >64</text>
<path d="M933.47 284.15L935.57 279.65H944.13L946.23 284.15L944.13 288.65H935.57Z" fill="#6ce66c" stroke="#48b448" stroke-width="0.7" stroke-linejoin="round"/>
<text x="939.85" y="286.75" font-size="6.3" fill="#143c14" text-anchor="middle" textLength="6.20" lengthAdjust="spacingAndGlyphs" >65</text>
<path d="M946.53 284.15L948.63 279.65H957.19L959.29 284.15L957.19 288.65H948.63Z" fill="#6ce66c" stroke="#48b448" stroke-width="0.7" stroke-linejoin="round"/>
<text x="952.91" y="286.75" font-size="6.3" fill="#143c14" text-anchor="middle" textLength="6.20" lengthAdjust="spacingAndGlyphs" >66</text>
<path d="M959.59 284.15L961.69 279.65H970.25L972.35 284.15L970.25 288.65H961.69Z" fill="#6ce66c" stroke="#48b448" stroke-width="0.7" stroke-linejoin="round"/>
<text x="965.97" y="286.75" font-size="6.3" fill="#143c14" text-anchor="middle" textLength="6.20" lengthAdjust="spacingAndGlyphs" >67</text>
<path d="M972.65 284.15L974.75 279.65H983.31L985.41 284.15L983.31 288.65H974.75Z" fill="#6ce66c" stroke="#48b448" stroke-width="0.7" stroke-linejoin="round"/>
<text x="979.03" y="286.75" font-size="6.3" fill="#143c14" text-anchor="middle" textLength="6.20" lengthAdjust="spacingAndGlyphs" >68</text>
<path d="M985.71 284.15L987.81 279.65H996.37L998.47 284.15L996.37 288.65H987.81Z" fill="#6ce66c" stroke="#48b448" stroke-width="0.7" stroke-linejoin="round"/>
<text x="992.09" y="286.75" font-size="6.3" fill="#143c14" text-anchor="middle" textLength="6.20" lengthAdjust="spacingAndGlyphs" >69</text>
<path d="M998.77 284.15L1000.87 279.65H1009.43L1011.53 284.15L1009.43 288.65H1000.87Z" fill="#6ce66c" stroke="#48b448" stroke-width="0.7" stroke-linejoin="round"/>
<text x="1005.15" y="286.75" font-size="6.3" fill="#143c14" text-anchor="middle" textLength="6.20" lengthAdjust="spacingAndGlyphs" >70</text>
<text x="49.00" y="286.45" font-size="6.8" fill="#000" text-anchor="start" textLength="40.00" lengthAdjust="spacingAndGlyphs" stroke="#ffffff" stroke-width="1.4" stroke-opacity="0.75" paint-order="stroke" stroke-linejoin="round">Counter: Edges</text>
<circle cx="102" cy="294.1" r="4.1" fill="#c47ae8" stroke="#9858c0" stroke-width="0.5"/>
<path d="M45.2 292.1 l2.1 2 l-2.1 2z" fill="#111"/>
<text x="49.00" y="296.50" font-size="6.8" fill="#000" text-anchor="start" textLength="56.60" lengthAdjust="spacingAndGlyphs" stroke="#ffffff" stroke-width="1.4" stroke-opacity="0.75" paint-order="stroke" stroke-linejoin="round">Counter: Word resets</text>
<line x1="45.00" y1="314.40" x2="1012.80" y2="314.40" stroke="#b0aab4" stroke-width="0.55" />
<path d="M156.05 314.40L158.45 310.25H185.02L187.42 314.40L185.02 318.55H158.45Z" fill="#c071ea" stroke="#8f52b0" stroke-width="0.7" stroke-linejoin="round"/>
<text x="171.79" y="316.85" font-size="6.0" fill="#3a1850" text-anchor="middle" textLength="6.20" lengthAdjust="spacingAndGlyphs" >00</text>
<path d="M188.22 314.40L190.62 310.25H217.19L219.59 314.40L217.19 318.55H190.62Z" fill="#c071ea" stroke="#8f52b0" stroke-width="0.7" stroke-linejoin="round"/>
<text x="203.96" y="316.85" font-size="6.0" fill="#3a1850" text-anchor="middle" textLength="6.20" lengthAdjust="spacingAndGlyphs" >00</text>
<path d="M220.39 314.40L222.79 310.25H249.36L251.76 314.40L249.36 318.55H222.79Z" fill="#c071ea" stroke="#8f52b0" stroke-width="0.7" stroke-linejoin="round"/>
<text x="236.13" y="316.85" font-size="6.0" fill="#3a1850" text-anchor="middle" textLength="6.20" lengthAdjust="spacingAndGlyphs" >00</text>
<path d="M252.56 314.40L254.96 310.25H281.53L283.93 314.40L281.53 318.55H254.96Z" fill="#c071ea" stroke="#8f52b0" stroke-width="0.7" stroke-linejoin="round"/>
<text x="268.30" y="316.85" font-size="6.0" fill="#3a1850" text-anchor="middle" textLength="6.20" lengthAdjust="spacingAndGlyphs" >00</text>
<path d="M284.73 314.40L287.13 310.25H313.70L316.10 314.40L313.70 318.55H287.13Z" fill="#c071ea" stroke="#8f52b0" stroke-width="0.7" stroke-linejoin="round"/>
<text x="300.47" y="316.85" font-size="6.0" fill="#3a1850" text-anchor="middle" textLength="6.20" lengthAdjust="spacingAndGlyphs" >01</text>
<path d="M316.90 314.40L319.30 310.25H345.88L348.27 314.40L345.88 318.55H319.30Z" fill="#c071ea" stroke="#8f52b0" stroke-width="0.7" stroke-linejoin="round"/>
<text x="332.64" y="316.85" font-size="6.0" fill="#3a1850" text-anchor="middle" textLength="5.90" lengthAdjust="spacingAndGlyphs" >FF</text>
<path d="M349.07 314.40L351.47 310.25H378.05L380.45 314.40L378.05 318.55H351.47Z" fill="#c071ea" stroke="#8f52b0" stroke-width="0.7" stroke-linejoin="round"/>
<text x="364.81" y="316.85" font-size="6.0" fill="#3a1850" text-anchor="middle" textLength="6.20" lengthAdjust="spacingAndGlyphs" >00</text>
<path d="M381.25 314.40L383.65 310.25H410.22L412.62 314.40L410.22 318.55H383.65Z" fill="#c071ea" stroke="#8f52b0" stroke-width="0.7" stroke-linejoin="round"/>
<text x="396.98" y="316.85" font-size="6.0" fill="#3a1850" text-anchor="middle" textLength="6.20" lengthAdjust="spacingAndGlyphs" >00</text>
<path d="M413.42 314.40L415.82 310.25H442.39L444.79 314.40L442.39 318.55H415.82Z" fill="#c071ea" stroke="#8f52b0" stroke-width="0.7" stroke-linejoin="round"/>
<text x="429.15" y="316.85" font-size="6.0" fill="#3a1850" text-anchor="middle" textLength="6.20" lengthAdjust="spacingAndGlyphs" >01</text>
<path d="M445.59 314.40L447.99 310.25H474.56L476.96 314.40L474.56 318.55H447.99Z" fill="#c071ea" stroke="#8f52b0" stroke-width="0.7" stroke-linejoin="round"/>
<text x="461.32" y="316.85" font-size="6.0" fill="#3a1850" text-anchor="middle" textLength="5.90" lengthAdjust="spacingAndGlyphs" >FF</text>
<path d="M477.76 314.40L480.16 310.25H506.73L509.13 314.40L506.73 318.55H480.16Z" fill="#c071ea" stroke="#8f52b0" stroke-width="0.7" stroke-linejoin="round"/>
<text x="493.49" y="316.85" font-size="6.0" fill="#3a1850" text-anchor="middle" textLength="5.90" lengthAdjust="spacingAndGlyphs" >FF</text>
<path d="M509.93 314.40L512.33 310.25H538.90L541.30 314.40L538.90 318.55H512.33Z" fill="#c071ea" stroke="#8f52b0" stroke-width="0.7" stroke-linejoin="round"/>
<text x="525.66" y="316.85" font-size="6.0" fill="#3a1850" text-anchor="middle" textLength="5.90" lengthAdjust="spacingAndGlyphs" >FE</text>
<path d="M542.10 314.40L544.50 310.25H571.07L573.47 314.40L571.07 318.55H544.50Z" fill="#c071ea" stroke="#8f52b0" stroke-width="0.7" stroke-linejoin="round"/>
<text x="557.84" y="316.85" font-size="6.0" fill="#3a1850" text-anchor="middle" textLength="6.20" lengthAdjust="spacingAndGlyphs" >00</text>
<path d="M574.27 314.40L576.67 310.25H603.24L605.64 314.40L603.24 318.55H576.67Z" fill="#c071ea" stroke="#8f52b0" stroke-width="0.7" stroke-linejoin="round"/>
<text x="590.01" y="316.85" font-size="6.0" fill="#3a1850" text-anchor="middle" textLength="6.20" lengthAdjust="spacingAndGlyphs" >00</text>
<path d="M606.44 314.40L608.84 310.25H635.41L637.81 314.40L635.41 318.55H608.84Z" fill="#c071ea" stroke="#8f52b0" stroke-width="0.7" stroke-linejoin="round"/>
<text x="622.18" y="316.85" font-size="6.0" fill="#3a1850" text-anchor="middle" textLength="6.20" lengthAdjust="spacingAndGlyphs" >00</text>
<path d="M638.61 314.40L641.01 310.25H667.58L669.98 314.40L667.58 318.55H641.01Z" fill="#c071ea" stroke="#8f52b0" stroke-width="0.7" stroke-linejoin="round"/>
<text x="654.35" y="316.85" font-size="6.0" fill="#3a1850" text-anchor="middle" textLength="6.20" lengthAdjust="spacingAndGlyphs" >00</text>
<path d="M670.78 314.40L673.18 310.25H699.75L702.15 314.40L699.75 318.55H673.18Z" fill="#c071ea" stroke="#8f52b0" stroke-width="0.7" stroke-linejoin="round"/>
<text x="686.52" y="316.85" font-size="6.0" fill="#3a1850" text-anchor="middle" textLength="6.20" lengthAdjust="spacingAndGlyphs" >00</text>
<path d="M702.95 314.40L705.35 310.25H731.92L734.32 314.40L731.92 318.55H705.35Z" fill="#c071ea" stroke="#8f52b0" stroke-width="0.7" stroke-linejoin="round"/>
<text x="718.69" y="316.85" font-size="6.0" fill="#3a1850" text-anchor="middle" textLength="6.20" lengthAdjust="spacingAndGlyphs" >00</text>
<path d="M735.12 314.40L737.52 310.25H764.10L766.50 314.40L764.10 318.55H737.52Z" fill="#c071ea" stroke="#8f52b0" stroke-width="0.7" stroke-linejoin="round"/>
<text x="750.86" y="316.85" font-size="6.0" fill="#3a1850" text-anchor="middle" textLength="6.20" lengthAdjust="spacingAndGlyphs" >00</text>
<path d="M767.30 314.40L769.70 310.25H796.27L798.67 314.40L796.27 318.55H769.70Z" fill="#c071ea" stroke="#8f52b0" stroke-width="0.7" stroke-linejoin="round"/>
<text x="783.03" y="316.85" font-size="6.0" fill="#3a1850" text-anchor="middle" textLength="6.05" lengthAdjust="spacingAndGlyphs" >1F</text>
<path d="M799.47 314.40L801.87 310.25H828.44L830.84 314.40L828.44 318.55H801.87Z" fill="#c071ea" stroke="#8f52b0" stroke-width="0.7" stroke-linejoin="round"/>
<text x="815.20" y="316.85" font-size="6.0" fill="#3a1850" text-anchor="middle" textLength="5.90" lengthAdjust="spacingAndGlyphs" >FE</text>
<path d="M831.64 314.40L834.04 310.25H860.61L863.01 314.40L860.61 318.55H834.04Z" fill="#c071ea" stroke="#8f52b0" stroke-width="0.7" stroke-linejoin="round"/>
<text x="847.37" y="316.85" font-size="6.0" fill="#3a1850" text-anchor="middle" textLength="6.20" lengthAdjust="spacingAndGlyphs" >00</text>
<path d="M863.81 314.40L866.21 310.25H892.78L895.18 314.40L892.78 318.55H866.21Z" fill="#c071ea" stroke="#8f52b0" stroke-width="0.7" stroke-linejoin="round"/>
<text x="879.54" y="316.85" font-size="6.0" fill="#3a1850" text-anchor="middle" textLength="6.05" lengthAdjust="spacingAndGlyphs" >1F</text>
<path d="M895.98 314.40L898.38 310.25H924.95L927.35 314.40L924.95 318.55H898.38Z" fill="#c071ea" stroke="#8f52b0" stroke-width="0.7" stroke-linejoin="round"/>
<text x="911.71" y="316.85" font-size="6.0" fill="#3a1850" text-anchor="middle" textLength="5.90" lengthAdjust="spacingAndGlyphs" >FE</text>
<path d="M155.90 324.60L156.85 320.10H158.57L159.52 324.60L158.57 329.10H156.85ZM159.92 324.60L160.87 320.10H162.59L163.54 324.60L162.59 329.10H160.87ZM163.94 324.60L164.89 320.10H166.61L167.56 324.60L166.61 329.10H164.89ZM167.96 324.60L168.91 320.10H170.64L171.59 324.60L170.64 329.10H168.91ZM171.99 324.60L172.94 320.10H174.66L175.61 324.60L174.66 329.10H172.94ZM176.01 324.60L176.96 320.10H178.68L179.63 324.60L178.68 329.10H176.96ZM180.03 324.60L180.98 320.10H182.70L183.65 324.60L182.70 329.10H180.98ZM184.05 324.60L185.00 320.10H186.72L187.67 324.60L186.72 329.10H185.00ZM188.07 324.60L189.02 320.10H190.74L191.69 324.60L190.74 329.10H189.02ZM192.09 324.60L193.04 320.10H194.76L195.71 324.60L194.76 329.10H193.04ZM196.11 324.60L197.06 320.10H198.78L199.73 324.60L198.78 329.10H197.06ZM200.13 324.60L201.08 320.10H202.81L203.76 324.60L202.81 329.10H201.08ZM204.16 324.60L205.11 320.10H206.83L207.78 324.60L206.83 329.10H205.11ZM208.18 324.60L209.13 320.10H210.85L211.80 324.60L210.85 329.10H209.13ZM212.20 324.60L213.15 320.10H214.87L215.82 324.60L214.87 329.10H213.15ZM216.22 324.60L217.17 320.10H218.89L219.84 324.60L218.89 329.10H217.17ZM220.24 324.60L221.19 320.10H222.91L223.86 324.60L222.91 329.10H221.19ZM224.26 324.60L225.21 320.10H226.93L227.88 324.60L226.93 329.10H225.21ZM228.28 324.60L229.23 320.10H230.96L231.91 324.60L230.96 329.10H229.23ZM232.31 324.60L233.26 320.10H234.98L235.93 324.60L234.98 329.10H233.26ZM236.33 324.60L237.28 320.10H239.00L239.95 324.60L239.00 329.10H237.28ZM240.35 324.60L241.30 320.10H243.02L243.97 324.60L243.02 329.10H241.30ZM244.37 324.60L245.32 320.10H247.04L247.99 324.60L247.04 329.10H245.32ZM248.39 324.60L249.34 320.10H251.06L252.01 324.60L251.06 329.10H249.34ZM252.41 324.60L253.36 320.10H255.08L256.03 324.60L255.08 329.10H253.36ZM256.43 324.60L257.38 320.10H259.11L260.06 324.60L259.11 329.10H257.38ZM260.46 324.60L261.41 320.10H263.13L264.08 324.60L263.13 329.10H261.41ZM264.48 324.60L265.43 320.10H267.15L268.10 324.60L267.15 329.10H265.43ZM268.50 324.60L269.45 320.10H271.17L272.12 324.60L271.17 329.10H269.45ZM272.52 324.60L273.47 320.10H275.19L276.14 324.60L275.19 329.10H273.47ZM276.54 324.60L277.49 320.10H279.21L280.16 324.60L279.21 329.10H277.49ZM280.56 324.60L281.51 320.10H283.23L284.18 324.60L283.23 329.10H281.51ZM284.58 324.60L285.53 320.10H287.25L288.20 324.60L287.25 329.10H285.53ZM288.60 324.60L289.55 320.10H291.28L292.23 324.60L291.28 329.10H289.55ZM292.63 324.60L293.58 320.10H295.30L296.25 324.60L295.30 329.10H293.58ZM296.65 324.60L297.60 320.10H299.32L300.27 324.60L299.32 329.10H297.60ZM300.67 324.60L301.62 320.10H303.34L304.29 324.60L303.34 329.10H301.62ZM304.69 324.60L305.64 320.10H307.36L308.31 324.60L307.36 329.10H305.64ZM308.71 324.60L309.66 320.10H311.38L312.33 324.60L311.38 329.10H309.66ZM312.73 324.60L313.68 320.10H315.40L316.35 324.60L315.40 329.10H313.68ZM316.75 324.60L317.70 320.10H319.43L320.38 324.60L319.43 329.10H317.70ZM320.78 324.60L321.73 320.10H323.45L324.40 324.60L323.45 329.10H321.73ZM324.80 324.60L325.75 320.10H327.47L328.42 324.60L327.47 329.10H325.75ZM328.82 324.60L329.77 320.10H331.49L332.44 324.60L331.49 329.10H329.77ZM332.84 324.60L333.79 320.10H335.51L336.46 324.60L335.51 329.10H333.79ZM336.86 324.60L337.81 320.10H339.53L340.48 324.60L339.53 329.10H337.81ZM340.88 324.60L341.83 320.10H343.55L344.50 324.60L343.55 329.10H341.83ZM344.90 324.60L345.85 320.10H347.57L348.52 324.60L347.57 329.10H345.85ZM348.92 324.60L349.87 320.10H351.60L352.55 324.60L351.60 329.10H349.87ZM352.95 324.60L353.90 320.10H355.62L356.57 324.60L355.62 329.10H353.90ZM356.97 324.60L357.92 320.10H359.64L360.59 324.60L359.64 329.10H357.92ZM360.99 324.60L361.94 320.10H363.66L364.61 324.60L363.66 329.10H361.94ZM365.01 324.60L365.96 320.10H367.68L368.63 324.60L367.68 329.10H365.96ZM369.03 324.60L369.98 320.10H371.70L372.65 324.60L371.70 329.10H369.98ZM373.05 324.60L374.00 320.10H375.72L376.67 324.60L375.72 329.10H374.00ZM377.07 324.60L378.02 320.10H379.75L380.70 324.60L379.75 329.10H378.02ZM381.10 324.60L382.05 320.10H383.77L384.72 324.60L383.77 329.10H382.05ZM385.12 324.60L386.07 320.10H387.79L388.74 324.60L387.79 329.10H386.07ZM389.14 324.60L390.09 320.10H391.81L392.76 324.60L391.81 329.10H390.09ZM393.16 324.60L394.11 320.10H395.83L396.78 324.60L395.83 329.10H394.11ZM397.18 324.60L398.13 320.10H399.85L400.80 324.60L399.85 329.10H398.13ZM401.20 324.60L402.15 320.10H403.87L404.82 324.60L403.87 329.10H402.15ZM405.22 324.60L406.17 320.10H407.90L408.85 324.60L407.90 329.10H406.17ZM409.25 324.60L410.20 320.10H411.92L412.87 324.60L411.92 329.10H410.20ZM413.27 324.60L414.22 320.10H415.94L416.89 324.60L415.94 329.10H414.22ZM417.29 324.60L418.24 320.10H419.96L420.91 324.60L419.96 329.10H418.24ZM421.31 324.60L422.26 320.10H423.98L424.93 324.60L423.98 329.10H422.26ZM425.33 324.60L426.28 320.10H428.00L428.95 324.60L428.00 329.10H426.28ZM429.35 324.60L430.30 320.10H432.02L432.97 324.60L432.02 329.10H430.30ZM433.37 324.60L434.32 320.10H436.04L436.99 324.60L436.04 329.10H434.32ZM437.39 324.60L438.34 320.10H440.07L441.02 324.60L440.07 329.10H438.34ZM441.42 324.60L442.37 320.10H444.09L445.04 324.60L444.09 329.10H442.37ZM445.44 324.60L446.39 320.10H448.11L449.06 324.60L448.11 329.10H446.39ZM449.46 324.60L450.41 320.10H452.13L453.08 324.60L452.13 329.10H450.41ZM453.48 324.60L454.43 320.10H456.15L457.10 324.60L456.15 329.10H454.43ZM457.50 324.60L458.45 320.10H460.17L461.12 324.60L460.17 329.10H458.45ZM461.52 324.60L462.47 320.10H464.19L465.14 324.60L464.19 329.10H462.47ZM465.54 324.60L466.49 320.10H468.22L469.17 324.60L468.22 329.10H466.49ZM469.57 324.60L470.52 320.10H472.24L473.19 324.60L472.24 329.10H470.52ZM473.59 324.60L474.54 320.10H476.26L477.21 324.60L476.26 329.10H474.54ZM477.61 324.60L478.56 320.10H480.28L481.23 324.60L480.28 329.10H478.56ZM481.63 324.60L482.58 320.10H484.30L485.25 324.60L484.30 329.10H482.58ZM485.65 324.60L486.60 320.10H488.32L489.27 324.60L488.32 329.10H486.60ZM489.67 324.60L490.62 320.10H492.34L493.29 324.60L492.34 329.10H490.62ZM493.69 324.60L494.64 320.10H496.37L497.32 324.60L496.37 329.10H494.64ZM497.72 324.60L498.67 320.10H500.39L501.34 324.60L500.39 329.10H498.67ZM501.74 324.60L502.69 320.10H504.41L505.36 324.60L504.41 329.10H502.69ZM505.76 324.60L506.71 320.10H508.43L509.38 324.60L508.43 329.10H506.71ZM509.78 324.60L510.73 320.10H512.45L513.40 324.60L512.45 329.10H510.73ZM513.80 324.60L514.75 320.10H516.47L517.42 324.60L516.47 329.10H514.75ZM517.82 324.60L518.77 320.10H520.49L521.44 324.60L520.49 329.10H518.77ZM521.84 324.60L522.79 320.10H524.51L525.46 324.60L524.51 329.10H522.79ZM525.86 324.60L526.81 320.10H528.54L529.49 324.60L528.54 329.10H526.81ZM529.89 324.60L530.84 320.10H532.56L533.51 324.60L532.56 329.10H530.84ZM533.91 324.60L534.86 320.10H536.58L537.53 324.60L536.58 329.10H534.86ZM537.93 324.60L538.88 320.10H540.60L541.55 324.60L540.60 329.10H538.88ZM541.95 324.60L542.90 320.10H544.62L545.57 324.60L544.62 329.10H542.90ZM545.97 324.60L546.92 320.10H548.64L549.59 324.60L548.64 329.10H546.92ZM549.99 324.60L550.94 320.10H552.66L553.61 324.60L552.66 329.10H550.94ZM554.01 324.60L554.96 320.10H556.69L557.64 324.60L556.69 329.10H554.96ZM558.04 324.60L558.99 320.10H560.71L561.66 324.60L560.71 329.10H558.99ZM562.06 324.60L563.01 320.10H564.73L565.68 324.60L564.73 329.10H563.01ZM566.08 324.60L567.03 320.10H568.75L569.70 324.60L568.75 329.10H567.03ZM570.10 324.60L571.05 320.10H572.77L573.72 324.60L572.77 329.10H571.05ZM574.12 324.60L575.07 320.10H576.79L577.74 324.60L576.79 329.10H575.07ZM578.14 324.60L579.09 320.10H580.81L581.76 324.60L580.81 329.10H579.09ZM582.16 324.60L583.11 320.10H584.83L585.78 324.60L584.83 329.10H583.11ZM586.18 324.60L587.13 320.10H588.86L589.81 324.60L588.86 329.10H587.13ZM590.21 324.60L591.16 320.10H592.88L593.83 324.60L592.88 329.10H591.16ZM594.23 324.60L595.18 320.10H596.90L597.85 324.60L596.90 329.10H595.18ZM598.25 324.60L599.20 320.10H600.92L601.87 324.60L600.92 329.10H599.20ZM602.27 324.60L603.22 320.10H604.94L605.89 324.60L604.94 329.10H603.22ZM606.29 324.60L607.24 320.10H608.96L609.91 324.60L608.96 329.10H607.24ZM610.31 324.60L611.26 320.10H612.98L613.93 324.60L612.98 329.10H611.26ZM614.33 324.60L615.28 320.10H617.01L617.96 324.60L617.01 329.10H615.28ZM618.36 324.60L619.31 320.10H621.03L621.98 324.60L621.03 329.10H619.31ZM622.38 324.60L623.33 320.10H625.05L626.00 324.60L625.05 329.10H623.33ZM626.40 324.60L627.35 320.10H629.07L630.02 324.60L629.07 329.10H627.35ZM630.42 324.60L631.37 320.10H633.09L634.04 324.60L633.09 329.10H631.37ZM634.44 324.60L635.39 320.10H637.11L638.06 324.60L637.11 329.10H635.39ZM638.46 324.60L639.41 320.10H641.13L642.08 324.60L641.13 329.10H639.41ZM642.48 324.60L643.43 320.10H645.16L646.11 324.60L645.16 329.10H643.43ZM646.51 324.60L647.46 320.10H649.18L650.13 324.60L649.18 329.10H647.46ZM650.53 324.60L651.48 320.10H653.20L654.15 324.60L653.20 329.10H651.48ZM654.55 324.60L655.50 320.10H657.22L658.17 324.60L657.22 329.10H655.50ZM658.57 324.60L659.52 320.10H661.24L662.19 324.60L661.24 329.10H659.52ZM662.59 324.60L663.54 320.10H665.26L666.21 324.60L665.26 329.10H663.54ZM666.61 324.60L667.56 320.10H669.28L670.23 324.60L669.28 329.10H667.56ZM670.63 324.60L671.58 320.10H673.30L674.25 324.60L673.30 329.10H671.58ZM674.65 324.60L675.60 320.10H677.33L678.28 324.60L677.33 329.10H675.60ZM678.68 324.60L679.63 320.10H681.35L682.30 324.60L681.35 329.10H679.63ZM682.70 324.60L683.65 320.10H685.37L686.32 324.60L685.37 329.10H683.65ZM686.72 324.60L687.67 320.10H689.39L690.34 324.60L689.39 329.10H687.67ZM690.74 324.60L691.69 320.10H693.41L694.36 324.60L693.41 329.10H691.69ZM694.76 324.60L695.71 320.10H697.43L698.38 324.60L697.43 329.10H695.71ZM698.78 324.60L699.73 320.10H701.45L702.40 324.60L701.45 329.10H699.73ZM702.80 324.60L703.75 320.10H705.48L706.43 324.60L705.48 329.10H703.75ZM706.83 324.60L707.78 320.10H709.50L710.45 324.60L709.50 329.10H707.78ZM710.85 324.60L711.80 320.10H713.52L714.47 324.60L713.52 329.10H711.80ZM714.87 324.60L715.82 320.10H717.54L718.49 324.60L717.54 329.10H715.82ZM718.89 324.60L719.84 320.10H721.56L722.51 324.60L721.56 329.10H719.84ZM722.91 324.60L723.86 320.10H725.58L726.53 324.60L725.58 329.10H723.86ZM726.93 324.60L727.88 320.10H729.60L730.55 324.60L729.60 329.10H727.88ZM730.95 324.60L731.90 320.10H733.62L734.57 324.60L733.62 329.10H731.90ZM734.97 324.60L735.92 320.10H737.65L738.60 324.60L737.65 329.10H735.92ZM739.00 324.60L739.95 320.10H741.67L742.62 324.60L741.67 329.10H739.95ZM743.02 324.60L743.97 320.10H745.69L746.64 324.60L745.69 329.10H743.97ZM747.04 324.60L747.99 320.10H749.71L750.66 324.60L749.71 329.10H747.99ZM751.06 324.60L752.01 320.10H753.73L754.68 324.60L753.73 329.10H752.01ZM755.08 324.60L756.03 320.10H757.75L758.70 324.60L757.75 329.10H756.03ZM759.10 324.60L760.05 320.10H761.77L762.72 324.60L761.77 329.10H760.05ZM763.12 324.60L764.07 320.10H765.80L766.75 324.60L765.80 329.10H764.07ZM767.15 324.60L768.10 320.10H769.82L770.77 324.60L769.82 329.10H768.10ZM771.17 324.60L772.12 320.10H773.84L774.79 324.60L773.84 329.10H772.12ZM775.19 324.60L776.14 320.10H777.86L778.81 324.60L777.86 329.10H776.14ZM779.21 324.60L780.16 320.10H781.88L782.83 324.60L781.88 329.10H780.16ZM783.23 324.60L784.18 320.10H785.90L786.85 324.60L785.90 329.10H784.18ZM787.25 324.60L788.20 320.10H789.92L790.87 324.60L789.92 329.10H788.20ZM791.27 324.60L792.22 320.10H793.95L794.90 324.60L793.95 329.10H792.22ZM795.30 324.60L796.25 320.10H797.97L798.92 324.60L797.97 329.10H796.25ZM799.32 324.60L800.27 320.10H801.99L802.94 324.60L801.99 329.10H800.27ZM803.34 324.60L804.29 320.10H806.01L806.96 324.60L806.01 329.10H804.29ZM807.36 324.60L808.31 320.10H810.03L810.98 324.60L810.03 329.10H808.31ZM811.38 324.60L812.33 320.10H814.05L815.00 324.60L814.05 329.10H812.33ZM815.40 324.60L816.35 320.10H818.07L819.02 324.60L818.07 329.10H816.35ZM819.42 324.60L820.37 320.10H822.09L823.04 324.60L822.09 329.10H820.37ZM823.44 324.60L824.39 320.10H826.12L827.07 324.60L826.12 329.10H824.39ZM827.47 324.60L828.42 320.10H830.14L831.09 324.60L830.14 329.10H828.42ZM831.49 324.60L832.44 320.10H834.16L835.11 324.60L834.16 329.10H832.44ZM835.51 324.60L836.46 320.10H838.18L839.13 324.60L838.18 329.10H836.46ZM839.53 324.60L840.48 320.10H842.20L843.15 324.60L842.20 329.10H840.48ZM843.55 324.60L844.50 320.10H846.22L847.17 324.60L846.22 329.10H844.50ZM847.57 324.60L848.52 320.10H850.24L851.19 324.60L850.24 329.10H848.52ZM851.59 324.60L852.54 320.10H854.27L855.22 324.60L854.27 329.10H852.54ZM855.62 324.60L856.57 320.10H858.29L859.24 324.60L858.29 329.10H856.57ZM859.64 324.60L860.59 320.10H862.31L863.26 324.60L862.31 329.10H860.59ZM863.66 324.60L864.61 320.10H866.33L867.28 324.60L866.33 329.10H864.61ZM867.68 324.60L868.63 320.10H870.35L871.30 324.60L870.35 329.10H868.63ZM871.70 324.60L872.65 320.10H874.37L875.32 324.60L874.37 329.10H872.65ZM875.72 324.60L876.67 320.10H878.39L879.34 324.60L878.39 329.10H876.67ZM879.74 324.60L880.69 320.10H882.42L883.37 324.60L882.42 329.10H880.69ZM883.77 324.60L884.72 320.10H886.44L887.39 324.60L886.44 329.10H884.72ZM887.79 324.60L888.74 320.10H890.46L891.41 324.60L890.46 329.10H888.74ZM891.81 324.60L892.76 320.10H894.48L895.43 324.60L894.48 329.10H892.76ZM895.83 324.60L896.78 320.10H898.50L899.45 324.60L898.50 329.10H896.78ZM899.85 324.60L900.80 320.10H902.52L903.47 324.60L902.52 329.10H900.80ZM903.87 324.60L904.82 320.10H906.54L907.49 324.60L906.54 329.10H904.82ZM907.89 324.60L908.84 320.10H910.56L911.51 324.60L910.56 329.10H908.84ZM911.91 324.60L912.86 320.10H914.59L915.54 324.60L914.59 329.10H912.86ZM915.94 324.60L916.89 320.10H918.61L919.56 324.60L918.61 329.10H916.89ZM919.96 324.60L920.91 320.10H922.63L923.58 324.60L922.63 329.10H920.91ZM923.98 324.60L924.93 320.10H926.65L927.60 324.60L926.65 329.10H924.93Z" fill="#ead65c" stroke="#a89838" stroke-width="0.6" stroke-linejoin="round"/>
<path d="M156.05 334.60L158.45 330.45H185.02L187.42 334.60L185.02 338.75H158.45Z" fill="#e98b6b" stroke="#a8644c" stroke-width="0.7" stroke-linejoin="round"/>
<text x="171.79" y="337.05" font-size="6.0" fill="#50241a" text-anchor="middle" textLength="6.20" lengthAdjust="spacingAndGlyphs" >00</text>
<path d="M188.22 334.60L190.62 330.45H217.19L219.59 334.60L217.19 338.75H190.62Z" fill="#e98b6b" stroke="#a8644c" stroke-width="0.7" stroke-linejoin="round"/>
<text x="203.96" y="337.05" font-size="6.0" fill="#50241a" text-anchor="middle" textLength="6.20" lengthAdjust="spacingAndGlyphs" >00</text>
<path d="M220.39 334.60L222.79 330.45H249.36L251.76 334.60L249.36 338.75H222.79Z" fill="#e98b6b" stroke="#a8644c" stroke-width="0.7" stroke-linejoin="round"/>
<text x="236.13" y="337.05" font-size="6.0" fill="#50241a" text-anchor="middle" textLength="6.20" lengthAdjust="spacingAndGlyphs" >00</text>
<path d="M252.56 334.60L254.96 330.45H281.53L283.93 334.60L281.53 338.75H254.96Z" fill="#e98b6b" stroke="#a8644c" stroke-width="0.7" stroke-linejoin="round"/>
<text x="268.30" y="337.05" font-size="6.0" fill="#50241a" text-anchor="middle" textLength="6.20" lengthAdjust="spacingAndGlyphs" >00</text>
<path d="M284.73 334.60L287.13 330.45H313.70L316.10 334.60L313.70 338.75H287.13Z" fill="#e98b6b" stroke="#a8644c" stroke-width="0.7" stroke-linejoin="round"/>
<text x="300.47" y="337.05" font-size="6.0" fill="#50241a" text-anchor="middle" textLength="6.20" lengthAdjust="spacingAndGlyphs" >01</text>
<path d="M316.90 334.60L319.30 330.45H345.88L348.27 334.60L345.88 338.75H319.30Z" fill="#e98b6b" stroke="#a8644c" stroke-width="0.7" stroke-linejoin="round"/>
<text x="332.64" y="337.05" font-size="6.0" fill="#50241a" text-anchor="middle" textLength="5.90" lengthAdjust="spacingAndGlyphs" >FF</text>
<path d="M349.07 334.60L351.47 330.45H378.05L380.45 334.60L378.05 338.75H351.47Z" fill="#e98b6b" stroke="#a8644c" stroke-width="0.7" stroke-linejoin="round"/>
<text x="364.81" y="337.05" font-size="6.0" fill="#50241a" text-anchor="middle" textLength="6.20" lengthAdjust="spacingAndGlyphs" >00</text>
<path d="M381.25 334.60L383.65 330.45H410.22L412.62 334.60L410.22 338.75H383.65Z" fill="#e98b6b" stroke="#a8644c" stroke-width="0.7" stroke-linejoin="round"/>
<text x="396.98" y="337.05" font-size="6.0" fill="#50241a" text-anchor="middle" textLength="6.20" lengthAdjust="spacingAndGlyphs" >00</text>
<path d="M413.42 334.60L415.82 330.45H442.39L444.79 334.60L442.39 338.75H415.82Z" fill="#e98b6b" stroke="#a8644c" stroke-width="0.7" stroke-linejoin="round"/>
<text x="429.15" y="337.05" font-size="6.0" fill="#50241a" text-anchor="middle" textLength="6.20" lengthAdjust="spacingAndGlyphs" >00</text>
<path d="M445.59 334.60L447.99 330.45H474.56L476.96 334.60L474.56 338.75H447.99Z" fill="#e98b6b" stroke="#a8644c" stroke-width="0.7" stroke-linejoin="round"/>
<text x="461.32" y="337.05" font-size="6.0" fill="#50241a" text-anchor="middle" textLength="5.90" lengthAdjust="spacingAndGlyphs" >FF</text>
<path d="M477.76 334.60L480.16 330.45H506.73L509.13 334.60L506.73 338.75H480.16Z" fill="#e98b6b" stroke="#a8644c" stroke-width="0.7" stroke-linejoin="round"/>
<text x="493.49" y="337.05" font-size="6.0" fill="#50241a" text-anchor="middle" textLength="5.90" lengthAdjust="spacingAndGlyphs" >FF</text>
<path d="M509.93 334.60L512.33 330.45H538.90L541.30 334.60L538.90 338.75H512.33Z" fill="#e98b6b" stroke="#a8644c" stroke-width="0.7" stroke-linejoin="round"/>
<text x="525.66" y="337.05" font-size="6.0" fill="#50241a" text-anchor="middle" textLength="5.90" lengthAdjust="spacingAndGlyphs" >FF</text>
<path d="M542.10 334.60L544.50 330.45H571.07L573.47 334.60L571.07 338.75H544.50Z" fill="#e98b6b" stroke="#a8644c" stroke-width="0.7" stroke-linejoin="round"/>
<text x="557.84" y="337.05" font-size="6.0" fill="#50241a" text-anchor="middle" textLength="6.20" lengthAdjust="spacingAndGlyphs" >00</text>
<path d="M574.27 334.60L576.67 330.45H603.24L605.64 334.60L603.24 338.75H576.67Z" fill="#e98b6b" stroke="#a8644c" stroke-width="0.7" stroke-linejoin="round"/>
<text x="590.01" y="337.05" font-size="6.0" fill="#50241a" text-anchor="middle" textLength="6.20" lengthAdjust="spacingAndGlyphs" >00</text>
<path d="M606.44 334.60L608.84 330.45H635.41L637.81 334.60L635.41 338.75H608.84Z" fill="#e98b6b" stroke="#a8644c" stroke-width="0.7" stroke-linejoin="round"/>
<text x="622.18" y="337.05" font-size="6.0" fill="#50241a" text-anchor="middle" textLength="6.20" lengthAdjust="spacingAndGlyphs" >00</text>
<path d="M638.61 334.60L641.01 330.45H667.58L669.98 334.60L667.58 338.75H641.01Z" fill="#e98b6b" stroke="#a8644c" stroke-width="0.7" stroke-linejoin="round"/>
<text x="654.35" y="337.05" font-size="6.0" fill="#50241a" text-anchor="middle" textLength="6.20" lengthAdjust="spacingAndGlyphs" >00</text>
<path d="M670.78 334.60L673.18 330.45H699.75L702.15 334.60L699.75 338.75H673.18Z" fill="#e98b6b" stroke="#a8644c" stroke-width="0.7" stroke-linejoin="round"/>
<text x="686.52" y="337.05" font-size="6.0" fill="#50241a" text-anchor="middle" textLength="6.20" lengthAdjust="spacingAndGlyphs" >00</text>
<path d="M702.95 334.60L705.35 330.45H731.92L734.32 334.60L731.92 338.75H705.35Z" fill="#e98b6b" stroke="#a8644c" stroke-width="0.7" stroke-linejoin="round"/>
<text x="718.69" y="337.05" font-size="6.0" fill="#50241a" text-anchor="middle" textLength="6.20" lengthAdjust="spacingAndGlyphs" >00</text>
<path d="M735.12 334.60L737.52 330.45H764.10L766.50 334.60L764.10 338.75H737.52Z" fill="#e98b6b" stroke="#a8644c" stroke-width="0.7" stroke-linejoin="round"/>
<text x="750.86" y="337.05" font-size="6.0" fill="#50241a" text-anchor="middle" textLength="6.20" lengthAdjust="spacingAndGlyphs" >00</text>
<path d="M767.30 334.60L769.70 330.45H796.27L798.67 334.60L796.27 338.75H769.70Z" fill="#e98b6b" stroke="#a8644c" stroke-width="0.7" stroke-linejoin="round"/>
<text x="783.03" y="337.05" font-size="6.0" fill="#50241a" text-anchor="middle" textLength="6.05" lengthAdjust="spacingAndGlyphs" >0F</text>
<path d="M799.47 334.60L801.87 330.45H828.44L830.84 334.60L828.44 338.75H801.87Z" fill="#e98b6b" stroke="#a8644c" stroke-width="0.7" stroke-linejoin="round"/>
<text x="815.20" y="337.05" font-size="6.0" fill="#50241a" text-anchor="middle" textLength="5.90" lengthAdjust="spacingAndGlyphs" >FF</text>
<path d="M831.64 334.60L834.04 330.45H860.61L863.01 334.60L860.61 338.75H834.04Z" fill="#e98b6b" stroke="#a8644c" stroke-width="0.7" stroke-linejoin="round"/>
<text x="847.37" y="337.05" font-size="6.0" fill="#50241a" text-anchor="middle" textLength="6.20" lengthAdjust="spacingAndGlyphs" >00</text>
<path d="M863.81 334.60L866.21 330.45H892.78L895.18 334.60L892.78 338.75H866.21Z" fill="#e98b6b" stroke="#a8644c" stroke-width="0.7" stroke-linejoin="round"/>
<text x="879.54" y="337.05" font-size="6.0" fill="#50241a" text-anchor="middle" textLength="6.05" lengthAdjust="spacingAndGlyphs" >0F</text>
<path d="M895.98 334.60L898.38 330.45H924.95L927.35 334.60L924.95 338.75H898.38Z" fill="#e98b6b" stroke="#a8644c" stroke-width="0.7" stroke-linejoin="round"/>
<text x="911.71" y="337.05" font-size="6.0" fill="#50241a" text-anchor="middle" textLength="5.90" lengthAdjust="spacingAndGlyphs" >FF</text>
<path d="M155.90 344.90L156.85 340.40H158.57L159.52 344.90L158.57 349.40H156.85ZM159.92 344.90L160.87 340.40H162.59L163.54 344.90L162.59 349.40H160.87ZM163.94 344.90L164.89 340.40H166.61L167.56 344.90L166.61 349.40H164.89ZM167.96 344.90L168.91 340.40H170.64L171.59 344.90L170.64 349.40H168.91ZM171.99 344.90L172.94 340.40H174.66L175.61 344.90L174.66 349.40H172.94ZM176.01 344.90L176.96 340.40H178.68L179.63 344.90L178.68 349.40H176.96ZM180.03 344.90L180.98 340.40H182.70L183.65 344.90L182.70 349.40H180.98ZM184.05 344.90L185.00 340.40H186.72L187.67 344.90L186.72 349.40H185.00ZM188.07 344.90L189.02 340.40H190.74L191.69 344.90L190.74 349.40H189.02ZM192.09 344.90L193.04 340.40H194.76L195.71 344.90L194.76 349.40H193.04ZM196.11 344.90L197.06 340.40H198.78L199.73 344.90L198.78 349.40H197.06ZM200.13 344.90L201.08 340.40H202.81L203.76 344.90L202.81 349.40H201.08ZM204.16 344.90L205.11 340.40H206.83L207.78 344.90L206.83 349.40H205.11ZM208.18 344.90L209.13 340.40H210.85L211.80 344.90L210.85 349.40H209.13ZM212.20 344.90L213.15 340.40H214.87L215.82 344.90L214.87 349.40H213.15ZM216.22 344.90L217.17 340.40H218.89L219.84 344.90L218.89 349.40H217.17ZM220.24 344.90L221.19 340.40H222.91L223.86 344.90L222.91 349.40H221.19ZM224.26 344.90L225.21 340.40H226.93L227.88 344.90L226.93 349.40H225.21ZM228.28 344.90L229.23 340.40H230.96L231.91 344.90L230.96 349.40H229.23ZM232.31 344.90L233.26 340.40H234.98L235.93 344.90L234.98 349.40H233.26ZM236.33 344.90L237.28 340.40H239.00L239.95 344.90L239.00 349.40H237.28ZM240.35 344.90L241.30 340.40H243.02L243.97 344.90L243.02 349.40H241.30ZM244.37 344.90L245.32 340.40H247.04L247.99 344.90L247.04 349.40H245.32ZM248.39 344.90L249.34 340.40H251.06L252.01 344.90L251.06 349.40H249.34ZM252.41 344.90L253.36 340.40H255.08L256.03 344.90L255.08 349.40H253.36ZM256.43 344.90L257.38 340.40H259.11L260.06 344.90L259.11 349.40H257.38ZM260.46 344.90L261.41 340.40H263.13L264.08 344.90L263.13 349.40H261.41ZM264.48 344.90L265.43 340.40H267.15L268.10 344.90L267.15 349.40H265.43ZM268.50 344.90L269.45 340.40H271.17L272.12 344.90L271.17 349.40H269.45ZM272.52 344.90L273.47 340.40H275.19L276.14 344.90L275.19 349.40H273.47ZM276.54 344.90L277.49 340.40H279.21L280.16 344.90L279.21 349.40H277.49ZM280.56 344.90L281.51 340.40H283.23L284.18 344.90L283.23 349.40H281.51ZM284.58 344.90L285.53 340.40H287.25L288.20 344.90L287.25 349.40H285.53ZM288.60 344.90L289.55 340.40H291.28L292.23 344.90L291.28 349.40H289.55ZM292.63 344.90L293.58 340.40H295.30L296.25 344.90L295.30 349.40H293.58ZM296.65 344.90L297.60 340.40H299.32L300.27 344.90L299.32 349.40H297.60ZM300.67 344.90L301.62 340.40H303.34L304.29 344.90L303.34 349.40H301.62ZM304.69 344.90L305.64 340.40H307.36L308.31 344.90L307.36 349.40H305.64ZM308.71 344.90L309.66 340.40H311.38L312.33 344.90L311.38 349.40H309.66ZM312.73 344.90L313.68 340.40H315.40L316.35 344.90L315.40 349.40H313.68ZM316.75 344.90L317.70 340.40H319.43L320.38 344.90L319.43 349.40H317.70ZM320.78 344.90L321.73 340.40H323.45L324.40 344.90L323.45 349.40H321.73ZM324.80 344.90L325.75 340.40H327.47L328.42 344.90L327.47 349.40H325.75ZM328.82 344.90L329.77 340.40H331.49L332.44 344.90L331.49 349.40H329.77ZM332.84 344.90L333.79 340.40H335.51L336.46 344.90L335.51 349.40H333.79ZM336.86 344.90L337.81 340.40H339.53L340.48 344.90L339.53 349.40H337.81ZM340.88 344.90L341.83 340.40H343.55L344.50 344.90L343.55 349.40H341.83ZM344.90 344.90L345.85 340.40H347.57L348.52 344.90L347.57 349.40H345.85ZM348.92 344.90L349.87 340.40H351.60L352.55 344.90L351.60 349.40H349.87ZM352.95 344.90L353.90 340.40H355.62L356.57 344.90L355.62 349.40H353.90ZM356.97 344.90L357.92 340.40H359.64L360.59 344.90L359.64 349.40H357.92ZM360.99 344.90L361.94 340.40H363.66L364.61 344.90L363.66 349.40H361.94ZM365.01 344.90L365.96 340.40H367.68L368.63 344.90L367.68 349.40H365.96ZM369.03 344.90L369.98 340.40H371.70L372.65 344.90L371.70 349.40H369.98ZM373.05 344.90L374.00 340.40H375.72L376.67 344.90L375.72 349.40H374.00ZM377.07 344.90L378.02 340.40H379.75L380.70 344.90L379.75 349.40H378.02ZM381.10 344.90L382.05 340.40H383.77L384.72 344.90L383.77 349.40H382.05ZM385.12 344.90L386.07 340.40H387.79L388.74 344.90L387.79 349.40H386.07ZM389.14 344.90L390.09 340.40H391.81L392.76 344.90L391.81 349.40H390.09ZM393.16 344.90L394.11 340.40H395.83L396.78 344.90L395.83 349.40H394.11ZM397.18 344.90L398.13 340.40H399.85L400.80 344.90L399.85 349.40H398.13ZM401.20 344.90L402.15 340.40H403.87L404.82 344.90L403.87 349.40H402.15ZM405.22 344.90L406.17 340.40H407.90L408.85 344.90L407.90 349.40H406.17ZM409.25 344.90L410.20 340.40H411.92L412.87 344.90L411.92 349.40H410.20ZM413.27 344.90L414.22 340.40H415.94L416.89 344.90L415.94 349.40H414.22ZM417.29 344.90L418.24 340.40H419.96L420.91 344.90L419.96 349.40H418.24ZM421.31 344.90L422.26 340.40H423.98L424.93 344.90L423.98 349.40H422.26ZM425.33 344.90L426.28 340.40H428.00L428.95 344.90L428.00 349.40H426.28ZM429.35 344.90L430.30 340.40H432.02L432.97 344.90L432.02 349.40H430.30ZM433.37 344.90L434.32 340.40H436.04L436.99 344.90L436.04 349.40H434.32ZM437.39 344.90L438.34 340.40H440.07L441.02 344.90L440.07 349.40H438.34ZM441.42 344.90L442.37 340.40H444.09L445.04 344.90L444.09 349.40H442.37ZM445.44 344.90L446.39 340.40H448.11L449.06 344.90L448.11 349.40H446.39ZM449.46 344.90L450.41 340.40H452.13L453.08 344.90L452.13 349.40H450.41ZM453.48 344.90L454.43 340.40H456.15L457.10 344.90L456.15 349.40H454.43ZM457.50 344.90L458.45 340.40H460.17L461.12 344.90L460.17 349.40H458.45ZM461.52 344.90L462.47 340.40H464.19L465.14 344.90L464.19 349.40H462.47ZM465.54 344.90L466.49 340.40H468.22L469.17 344.90L468.22 349.40H466.49ZM469.57 344.90L470.52 340.40H472.24L473.19 344.90L472.24 349.40H470.52ZM473.59 344.90L474.54 340.40H476.26L477.21 344.90L476.26 349.40H474.54ZM477.61 344.90L478.56 340.40H480.28L481.23 344.90L480.28 349.40H478.56ZM481.63 344.90L482.58 340.40H484.30L485.25 344.90L484.30 349.40H482.58ZM485.65 344.90L486.60 340.40H488.32L489.27 344.90L488.32 349.40H486.60ZM489.67 344.90L490.62 340.40H492.34L493.29 344.90L492.34 349.40H490.62ZM493.69 344.90L494.64 340.40H496.37L497.32 344.90L496.37 349.40H494.64ZM497.72 344.90L498.67 340.40H500.39L501.34 344.90L500.39 349.40H498.67ZM501.74 344.90L502.69 340.40H504.41L505.36 344.90L504.41 349.40H502.69ZM505.76 344.90L506.71 340.40H508.43L509.38 344.90L508.43 349.40H506.71ZM509.78 344.90L510.73 340.40H512.45L513.40 344.90L512.45 349.40H510.73ZM513.80 344.90L514.75 340.40H516.47L517.42 344.90L516.47 349.40H514.75ZM517.82 344.90L518.77 340.40H520.49L521.44 344.90L520.49 349.40H518.77ZM521.84 344.90L522.79 340.40H524.51L525.46 344.90L524.51 349.40H522.79ZM525.86 344.90L526.81 340.40H528.54L529.49 344.90L528.54 349.40H526.81ZM529.89 344.90L530.84 340.40H532.56L533.51 344.90L532.56 349.40H530.84ZM533.91 344.90L534.86 340.40H536.58L537.53 344.90L536.58 349.40H534.86ZM537.93 344.90L538.88 340.40H540.60L541.55 344.90L540.60 349.40H538.88ZM541.95 344.90L542.90 340.40H544.62L545.57 344.90L544.62 349.40H542.90ZM545.97 344.90L546.92 340.40H548.64L549.59 344.90L548.64 349.40H546.92ZM549.99 344.90L550.94 340.40H552.66L553.61 344.90L552.66 349.40H550.94ZM554.01 344.90L554.96 340.40H556.69L557.64 344.90L556.69 349.40H554.96ZM558.04 344.90L558.99 340.40H560.71L561.66 344.90L560.71 349.40H558.99ZM562.06 344.90L563.01 340.40H564.73L565.68 344.90L564.73 349.40H563.01ZM566.08 344.90L567.03 340.40H568.75L569.70 344.90L568.75 349.40H567.03ZM570.10 344.90L571.05 340.40H572.77L573.72 344.90L572.77 349.40H571.05ZM574.12 344.90L575.07 340.40H576.79L577.74 344.90L576.79 349.40H575.07ZM578.14 344.90L579.09 340.40H580.81L581.76 344.90L580.81 349.40H579.09ZM582.16 344.90L583.11 340.40H584.83L585.78 344.90L584.83 349.40H583.11ZM586.18 344.90L587.13 340.40H588.86L589.81 344.90L588.86 349.40H587.13ZM590.21 344.90L591.16 340.40H592.88L593.83 344.90L592.88 349.40H591.16ZM594.23 344.90L595.18 340.40H596.90L597.85 344.90L596.90 349.40H595.18ZM598.25 344.90L599.20 340.40H600.92L601.87 344.90L600.92 349.40H599.20ZM602.27 344.90L603.22 340.40H604.94L605.89 344.90L604.94 349.40H603.22ZM606.29 344.90L607.24 340.40H608.96L609.91 344.90L608.96 349.40H607.24ZM610.31 344.90L611.26 340.40H612.98L613.93 344.90L612.98 349.40H611.26ZM614.33 344.90L615.28 340.40H617.01L617.96 344.90L617.01 349.40H615.28ZM618.36 344.90L619.31 340.40H621.03L621.98 344.90L621.03 349.40H619.31ZM622.38 344.90L623.33 340.40H625.05L626.00 344.90L625.05 349.40H623.33ZM626.40 344.90L627.35 340.40H629.07L630.02 344.90L629.07 349.40H627.35ZM630.42 344.90L631.37 340.40H633.09L634.04 344.90L633.09 349.40H631.37ZM634.44 344.90L635.39 340.40H637.11L638.06 344.90L637.11 349.40H635.39ZM638.46 344.90L639.41 340.40H641.13L642.08 344.90L641.13 349.40H639.41ZM642.48 344.90L643.43 340.40H645.16L646.11 344.90L645.16 349.40H643.43ZM646.51 344.90L647.46 340.40H649.18L650.13 344.90L649.18 349.40H647.46ZM650.53 344.90L651.48 340.40H653.20L654.15 344.90L653.20 349.40H651.48ZM654.55 344.90L655.50 340.40H657.22L658.17 344.90L657.22 349.40H655.50ZM658.57 344.90L659.52 340.40H661.24L662.19 344.90L661.24 349.40H659.52ZM662.59 344.90L663.54 340.40H665.26L666.21 344.90L665.26 349.40H663.54ZM666.61 344.90L667.56 340.40H669.28L670.23 344.90L669.28 349.40H667.56ZM670.63 344.90L671.58 340.40H673.30L674.25 344.90L673.30 349.40H671.58ZM674.65 344.90L675.60 340.40H677.33L678.28 344.90L677.33 349.40H675.60ZM678.68 344.90L679.63 340.40H681.35L682.30 344.90L681.35 349.40H679.63ZM682.70 344.90L683.65 340.40H685.37L686.32 344.90L685.37 349.40H683.65ZM686.72 344.90L687.67 340.40H689.39L690.34 344.90L689.39 349.40H687.67ZM690.74 344.90L691.69 340.40H693.41L694.36 344.90L693.41 349.40H691.69ZM694.76 344.90L695.71 340.40H697.43L698.38 344.90L697.43 349.40H695.71ZM698.78 344.90L699.73 340.40H701.45L702.40 344.90L701.45 349.40H699.73ZM702.80 344.90L703.75 340.40H705.48L706.43 344.90L705.48 349.40H703.75ZM706.83 344.90L707.78 340.40H709.50L710.45 344.90L709.50 349.40H707.78ZM710.85 344.90L711.80 340.40H713.52L714.47 344.90L713.52 349.40H711.80ZM714.87 344.90L715.82 340.40H717.54L718.49 344.90L717.54 349.40H715.82ZM718.89 344.90L719.84 340.40H721.56L722.51 344.90L721.56 349.40H719.84ZM722.91 344.90L723.86 340.40H725.58L726.53 344.90L725.58 349.40H723.86ZM726.93 344.90L727.88 340.40H729.60L730.55 344.90L729.60 349.40H727.88ZM730.95 344.90L731.90 340.40H733.62L734.57 344.90L733.62 349.40H731.90ZM734.97 344.90L735.92 340.40H737.65L738.60 344.90L737.65 349.40H735.92ZM739.00 344.90L739.95 340.40H741.67L742.62 344.90L741.67 349.40H739.95ZM743.02 344.90L743.97 340.40H745.69L746.64 344.90L745.69 349.40H743.97ZM747.04 344.90L747.99 340.40H749.71L750.66 344.90L749.71 349.40H747.99ZM751.06 344.90L752.01 340.40H753.73L754.68 344.90L753.73 349.40H752.01ZM755.08 344.90L756.03 340.40H757.75L758.70 344.90L757.75 349.40H756.03ZM759.10 344.90L760.05 340.40H761.77L762.72 344.90L761.77 349.40H760.05ZM763.12 344.90L764.07 340.40H765.80L766.75 344.90L765.80 349.40H764.07ZM767.15 344.90L768.10 340.40H769.82L770.77 344.90L769.82 349.40H768.10ZM771.17 344.90L772.12 340.40H773.84L774.79 344.90L773.84 349.40H772.12ZM775.19 344.90L776.14 340.40H777.86L778.81 344.90L777.86 349.40H776.14ZM779.21 344.90L780.16 340.40H781.88L782.83 344.90L781.88 349.40H780.16ZM783.23 344.90L784.18 340.40H785.90L786.85 344.90L785.90 349.40H784.18ZM787.25 344.90L788.20 340.40H789.92L790.87 344.90L789.92 349.40H788.20ZM791.27 344.90L792.22 340.40H793.95L794.90 344.90L793.95 349.40H792.22ZM795.30 344.90L796.25 340.40H797.97L798.92 344.90L797.97 349.40H796.25ZM799.32 344.90L800.27 340.40H801.99L802.94 344.90L801.99 349.40H800.27ZM803.34 344.90L804.29 340.40H806.01L806.96 344.90L806.01 349.40H804.29ZM807.36 344.90L808.31 340.40H810.03L810.98 344.90L810.03 349.40H808.31ZM811.38 344.90L812.33 340.40H814.05L815.00 344.90L814.05 349.40H812.33ZM815.40 344.90L816.35 340.40H818.07L819.02 344.90L818.07 349.40H816.35ZM819.42 344.90L820.37 340.40H822.09L823.04 344.90L822.09 349.40H820.37ZM823.44 344.90L824.39 340.40H826.12L827.07 344.90L826.12 349.40H824.39ZM827.47 344.90L828.42 340.40H830.14L831.09 344.90L830.14 349.40H828.42ZM831.49 344.90L832.44 340.40H834.16L835.11 344.90L834.16 349.40H832.44ZM835.51 344.90L836.46 340.40H838.18L839.13 344.90L838.18 349.40H836.46ZM839.53 344.90L840.48 340.40H842.20L843.15 344.90L842.20 349.40H840.48ZM843.55 344.90L844.50 340.40H846.22L847.17 344.90L846.22 349.40H844.50ZM847.57 344.90L848.52 340.40H850.24L851.19 344.90L850.24 349.40H848.52ZM851.59 344.90L852.54 340.40H854.27L855.22 344.90L854.27 349.40H852.54ZM855.62 344.90L856.57 340.40H858.29L859.24 344.90L858.29 349.40H856.57ZM859.64 344.90L860.59 340.40H862.31L863.26 344.90L862.31 349.40H860.59ZM863.66 344.90L864.61 340.40H866.33L867.28 344.90L866.33 349.40H864.61ZM867.68 344.90L868.63 340.40H870.35L871.30 344.90L870.35 349.40H868.63ZM871.70 344.90L872.65 340.40H874.37L875.32 344.90L874.37 349.40H872.65ZM875.72 344.90L876.67 340.40H878.39L879.34 344.90L878.39 349.40H876.67ZM879.74 344.90L880.69 340.40H882.42L883.37 344.90L882.42 349.40H880.69ZM883.77 344.90L884.72 340.40H886.44L887.39 344.90L886.44 349.40H884.72ZM887.79 344.90L888.74 340.40H890.46L891.41 344.90L890.46 349.40H888.74ZM891.81 344.90L892.76 340.40H894.48L895.43 344.90L894.48 349.40H892.76ZM895.83 344.90L896.78 340.40H898.50L899.45 344.90L898.50 349.40H896.78ZM899.85 344.90L900.80 340.40H902.52L903.47 344.90L902.52 349.40H900.80ZM903.87 344.90L904.82 340.40H906.54L907.49 344.90L906.54 349.40H904.82ZM907.89 344.90L908.84 340.40H910.56L911.51 344.90L910.56 349.40H908.84ZM911.91 344.90L912.86 340.40H914.59L915.54 344.90L914.59 349.40H912.86ZM915.94 344.90L916.89 340.40H918.61L919.56 344.90L918.61 349.40H916.89ZM919.96 344.90L920.91 340.40H922.63L923.58 344.90L922.63 349.40H920.91ZM923.98 344.90L924.93 340.40H926.65L927.60 344.90L926.65 349.40H924.93Z" fill="#62e49c" stroke="#3c9c68" stroke-width="0.6" stroke-linejoin="round"/>
<text x="49.00" y="316.70" font-size="6.8" fill="#000" text-anchor="start" textLength="39.50" lengthAdjust="spacingAndGlyphs" stroke="#ffffff" stroke-width="1.4" stroke-opacity="0.75" paint-order="stroke" stroke-linejoin="round">SPI: MISO data</text>
<path d="M45.2 322.50 l2.1 2 l-2.1 2z" fill="#111"/>
<text x="49.00" y="326.80" font-size="6.8" fill="#000" text-anchor="start" textLength="36.80" lengthAdjust="spacingAndGlyphs" stroke="#ffffff" stroke-width="1.4" stroke-opacity="0.75" paint-order="stroke" stroke-linejoin="round">SPI: MISO bits</text>
<path d="M45.2 332.60 l2.1 2 l-2.1 2z" fill="#111"/>
<text x="49.00" y="336.90" font-size="6.8" fill="#000" text-anchor="start" textLength="39.50" lengthAdjust="spacingAndGlyphs" stroke="#ffffff" stroke-width="1.4" stroke-opacity="0.75" paint-order="stroke" stroke-linejoin="round">SPI: MOSI data</text>
<path d="M45.2 342.70 l2.1 2 l-2.1 2z" fill="#111"/>
<text x="49.00" y="347.00" font-size="6.8" fill="#000" text-anchor="start" textLength="36.80" lengthAdjust="spacingAndGlyphs" stroke="#ffffff" stroke-width="1.4" stroke-opacity="0.75" paint-order="stroke" stroke-linejoin="round">SPI: MOSI bits</text>
<rect x="1003.10" y="111.76" width="1.90" height="242.74" fill="#000" fill-opacity="0.05"/>
<path d="M26.90 124.95H40.30L44.20 128.80L40.30 132.65H26.90Z" fill="#1c1c1c" stroke="#1c1c1c" stroke-width="0.5" stroke-linejoin="round"/>
<text x="28.80" y="131.60" font-size="6.5" fill="#f4efe4" text-anchor="start" textLength="8.60" lengthAdjust="spacingAndGlyphs" stroke="#000" stroke-width="0.5" stroke-opacity="0.2" paint-order="stroke">SIN</text>
<path d="M21.90 145.22H40.30L44.20 149.07L40.30 152.92H21.90Z" fill="#a55c00" stroke="#7a4400" stroke-width="0.5" stroke-linejoin="round"/>
<text x="23.80" y="151.87" font-size="6.5" fill="#f4efe4" text-anchor="start" textLength="13.60" lengthAdjust="spacingAndGlyphs" stroke="#000" stroke-width="0.5" stroke-opacity="0.2" paint-order="stroke">XERR</text>
<line x1="22.20" y1="145.22" x2="40.20" y2="145.22" stroke="#8c2a6e" stroke-width="0.5" stroke-dasharray="0.9 1.9" stroke-opacity="0.7"/>
<path d="M23.20 165.49H40.30L44.20 169.34L40.30 173.19H23.20Z" fill="#d61414" stroke="#a00c0c" stroke-width="0.5" stroke-linejoin="round"/>
<text x="25.10" y="172.14" font-size="6.5" fill="#f4efe4" text-anchor="start" textLength="12.30" lengthAdjust="spacingAndGlyphs" stroke="#000" stroke-width="0.5" stroke-opacity="0.2" paint-order="stroke">SCLK</text>
<path d="M23.20 185.76H40.30L44.20 189.61L40.30 193.46H23.20Z" fill="#f57c00" stroke="#c06000" stroke-width="0.5" stroke-linejoin="round"/>
<text x="25.10" y="192.41" font-size="6.5" fill="#000" text-anchor="start" textLength="12.30" lengthAdjust="spacingAndGlyphs" stroke="#fff" stroke-width="0.5" stroke-opacity="0.2" paint-order="stroke">XLAT</text>
<path d="M20.30 206.03H40.30L44.20 209.88L40.30 213.73H20.30Z" fill="#edd400" stroke="#b8a400" stroke-width="0.5" stroke-linejoin="round"/>
<text x="22.20" y="212.68" font-size="6.5" fill="#000" text-anchor="start" textLength="15.20" lengthAdjust="spacingAndGlyphs" stroke="#fff" stroke-width="0.5" stroke-opacity="0.2" paint-order="stroke">MODE</text>
<path d="M19.10 226.30H40.30L44.20 230.15L40.30 234.00H19.10Z" fill="#62d024" stroke="#46a414" stroke-width="0.5" stroke-linejoin="round"/>
<text x="21.00" y="232.95" font-size="6.5" fill="#000" text-anchor="start" textLength="16.40" lengthAdjust="spacingAndGlyphs" stroke="#fff" stroke-width="0.5" stroke-opacity="0.2" paint-order="stroke">BLANK</text>
<path d="M19.10 246.57H40.30L44.20 250.42L40.30 254.27H19.10Z" fill="#3a70b4" stroke="#28548c" stroke-width="0.5" stroke-linejoin="round"/>
<text x="21.00" y="253.22" font-size="6.5" fill="#f4efe4" text-anchor="start" textLength="16.40" lengthAdjust="spacingAndGlyphs" stroke="#000" stroke-width="0.5" stroke-opacity="0.2" paint-order="stroke">GSCLK</text>
<path d="M21.20 266.84H40.30L44.20 270.69L40.30 274.54H21.20Z" fill="#75507b" stroke="#58385c" stroke-width="0.5" stroke-linejoin="round"/>
<text x="23.10" y="273.49" font-size="6.5" fill="#f4efe4" text-anchor="start" textLength="14.30" lengthAdjust="spacingAndGlyphs" stroke="#000" stroke-width="0.5" stroke-opacity="0.2" paint-order="stroke">SOUT</text>
<path d="M14.90 280.30H40.30L44.20 284.15L40.30 288.00H14.90Z" fill="#3cba3c" stroke="#2a962a" stroke-width="0.5" stroke-linejoin="round"/>
<text x="16.80" y="286.95" font-size="6.5" fill="#f4efe4" text-anchor="start" textLength="20.60" lengthAdjust="spacingAndGlyphs" stroke="#000" stroke-width="0.5" stroke-opacity="0.2" paint-order="stroke">Counter</text>
<path d="M27.10 310.55H40.30L44.20 314.40L40.30 318.25H27.10Z" fill="#9a46c8" stroke="#7630a0" stroke-width="0.5" stroke-linejoin="round"/>
<text x="29.00" y="317.20" font-size="6.5" fill="#f4efe4" text-anchor="start" textLength="8.40" lengthAdjust="spacingAndGlyphs" stroke="#000" stroke-width="0.5" stroke-opacity="0.2" paint-order="stroke">SPI</text>
<path d="M15 126.2 H10.4 V273.1 H15.3" fill="none" stroke="#444" stroke-width="2.5" stroke-linejoin="miter"/>
<rect x="1012.80" y="70.00" width="9.10" height="474.20" fill="#f0f0f0" />
<rect x="1013.50" y="244.10" width="7.40" height="180.40" fill="#cdcdcd" />
<path d="M1015.4 75.2 l2 -2 l2 2" fill="none" stroke="#333" stroke-width="1.05"/>
<path d="M1015.4 538.4 l2 2 l2 -2" fill="none" stroke="#333" stroke-width="1.05"/>
<rect x="45.00" y="544.20" width="976.90" height="9.30" fill="#f0f0f0" />
<rect x="572.00" y="544.30" width="10.00" height="7.80" fill="#cdcdcd" />
<path d="M50 546.4 l-2 2 l2 2" fill="none" stroke="#333" stroke-width="1.05"/>
<path d="M1007.5 546.4 l2 2 l-2 2" fill="none" stroke="#333" stroke-width="1.05"/>
<rect x="0.00" y="12.30" width="1.20" height="542.70" fill="#f0f0f0" />
<rect x="1021.90" y="12.30" width="2.10" height="542.70" fill="#f0f0f0" />
<rect x="0.00" y="553.50" width="1024.00" height="1.50" fill="#eeeeee" />
</svg>
</body></html>
